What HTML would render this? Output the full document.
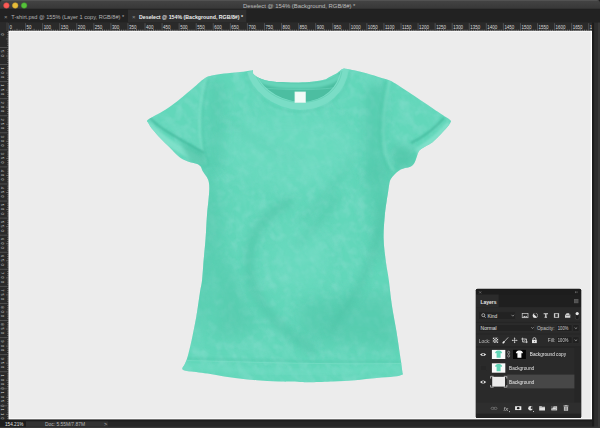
<!DOCTYPE html>
<html><head><meta charset="utf-8">
<style>
*{margin:0;padding:0;box-sizing:border-box}
html,body{width:600px;height:428px;overflow:hidden;background:#262626;font-family:"Liberation Sans",sans-serif}
svg{position:absolute;left:0;top:0}
.rt text{font-size:5.2px;fill:#dcdcdc;font-family:"Liberation Sans",sans-serif}
.rt text.lv{font-size:4.1px;fill:#d4d4d4}
.ui text{font-family:"Liberation Sans",sans-serif}
</style></head><body>
<svg width="600" height="428" viewBox="0 0 600 428" class="ui">
<defs>
<filter id="tex" x="0" y="0" width="100%" height="100%">
<feTurbulence type="fractalNoise" baseFrequency="0.05 0.03" numOctaves="3" seed="7" result="n"/>
<feColorMatrix in="n" type="matrix" values="0 0 0 0 0  0 0 0 0 0  0 0 0 0 0  0 0 0 -1.6 0.9" result="a"/>
<feComposite in="a" in2="SourceGraphic" operator="in"/>
</filter>
</defs>
<!-- title bar -->
<defs><linearGradient id="tg" x1="0" y1="0" x2="0" y2="1"><stop offset="0" stop-color="#444"/><stop offset="1" stop-color="#363636"/></linearGradient></defs><rect x="0" y="0" width="600" height="9.3" fill="url(#tg)"/><rect x="0" y="8.8" width="600" height="0.8" fill="#1c1c1c"/>
<rect x="0" y="0" width="600" height="0.7" fill="#5a5a5a"/>
<path d="M0,0 h3 a3,3 0 0 0 -3,3 z M600,0 h-3 a3,3 0 0 1 3,3 z" fill="#1a1a1a"/>
<circle cx="6.4" cy="5.5" r="2.8" fill="#fc5b57" stroke="#d0443f" stroke-width="0.5"/>
<circle cx="15.2" cy="5.5" r="2.8" fill="#e6bd3a" stroke="#c49a2a" stroke-width="0.5"/>
<circle cx="24.1" cy="5.5" r="2.8" fill="#56c13a" stroke="#3f9a2a" stroke-width="0.5"/>
<text x="243" y="7.5" font-size="5.9" fill="#bcbcbc">Deselect @ 154% (Background, RGB/8#) *</text>
<!-- tab bar -->
<rect x="0" y="9.6" width="600" height="12.9" fill="#222222"/>
<rect x="128" y="9.6" width="118.3" height="12.9" fill="#2f2f2f"/>
<text x="4" y="19" font-size="6" fill="#909090">×</text>
<text x="11.3" y="19" font-size="5.6" fill="#b4b4b4">T-shirt.psd @ 155% (Layer 1 copy, RGB/8#) *</text>
<text x="132" y="19" font-size="6" fill="#909090">×</text>
<text x="139" y="19" font-size="5.25" font-weight="bold" fill="#ededed">Deselect @ 154% (Background, RGB/8#) *</text>
<!-- rulers -->
<rect x="0" y="22.5" width="600" height="8.5" fill="#2a2a2a"/>
<rect x="0" y="22.5" width="8.5" height="400" fill="#2a2a2a"/>
<g class="rt">
<line x1="8.50" y1="23.2" x2="8.50" y2="31" stroke="#6e6e6e" stroke-width="0.6"/>
<text transform="translate(9.50,28.75) scale(0.86,1)">0</text>
<line x1="25.57" y1="23.2" x2="25.57" y2="31" stroke="#6e6e6e" stroke-width="0.6"/>
<text transform="translate(26.57,28.75) scale(0.86,1)">50</text>
<line x1="42.63" y1="23.2" x2="42.63" y2="31" stroke="#6e6e6e" stroke-width="0.6"/>
<text transform="translate(43.63,28.75) scale(0.86,1)">100</text>
<line x1="59.70" y1="23.2" x2="59.70" y2="31" stroke="#6e6e6e" stroke-width="0.6"/>
<text transform="translate(60.70,28.75) scale(0.86,1)">150</text>
<line x1="76.76" y1="23.2" x2="76.76" y2="31" stroke="#6e6e6e" stroke-width="0.6"/>
<text transform="translate(77.76,28.75) scale(0.86,1)">200</text>
<line x1="93.83" y1="23.2" x2="93.83" y2="31" stroke="#6e6e6e" stroke-width="0.6"/>
<text transform="translate(94.83,28.75) scale(0.86,1)">250</text>
<line x1="110.89" y1="23.2" x2="110.89" y2="31" stroke="#6e6e6e" stroke-width="0.6"/>
<text transform="translate(111.89,28.75) scale(0.86,1)">300</text>
<line x1="127.96" y1="23.2" x2="127.96" y2="31" stroke="#6e6e6e" stroke-width="0.6"/>
<text transform="translate(128.96,28.75) scale(0.86,1)">350</text>
<line x1="145.02" y1="23.2" x2="145.02" y2="31" stroke="#6e6e6e" stroke-width="0.6"/>
<text transform="translate(146.02,28.75) scale(0.86,1)">400</text>
<line x1="162.09" y1="23.2" x2="162.09" y2="31" stroke="#6e6e6e" stroke-width="0.6"/>
<text transform="translate(163.09,28.75) scale(0.86,1)">450</text>
<line x1="179.15" y1="23.2" x2="179.15" y2="31" stroke="#6e6e6e" stroke-width="0.6"/>
<text transform="translate(180.15,28.75) scale(0.86,1)">500</text>
<line x1="196.22" y1="23.2" x2="196.22" y2="31" stroke="#6e6e6e" stroke-width="0.6"/>
<text transform="translate(197.22,28.75) scale(0.86,1)">550</text>
<line x1="213.28" y1="23.2" x2="213.28" y2="31" stroke="#6e6e6e" stroke-width="0.6"/>
<text transform="translate(214.28,28.75) scale(0.86,1)">600</text>
<line x1="230.35" y1="23.2" x2="230.35" y2="31" stroke="#6e6e6e" stroke-width="0.6"/>
<text transform="translate(231.35,28.75) scale(0.86,1)">650</text>
<line x1="247.41" y1="23.2" x2="247.41" y2="31" stroke="#6e6e6e" stroke-width="0.6"/>
<text transform="translate(248.41,28.75) scale(0.86,1)">700</text>
<line x1="264.48" y1="23.2" x2="264.48" y2="31" stroke="#6e6e6e" stroke-width="0.6"/>
<text transform="translate(265.48,28.75) scale(0.86,1)">750</text>
<line x1="281.54" y1="23.2" x2="281.54" y2="31" stroke="#6e6e6e" stroke-width="0.6"/>
<text transform="translate(282.54,28.75) scale(0.86,1)">800</text>
<line x1="298.61" y1="23.2" x2="298.61" y2="31" stroke="#6e6e6e" stroke-width="0.6"/>
<text transform="translate(299.61,28.75) scale(0.86,1)">850</text>
<line x1="315.67" y1="23.2" x2="315.67" y2="31" stroke="#6e6e6e" stroke-width="0.6"/>
<text transform="translate(316.67,28.75) scale(0.86,1)">900</text>
<line x1="332.74" y1="23.2" x2="332.74" y2="31" stroke="#6e6e6e" stroke-width="0.6"/>
<text transform="translate(333.74,28.75) scale(0.86,1)">950</text>
<line x1="349.80" y1="23.2" x2="349.80" y2="31" stroke="#6e6e6e" stroke-width="0.6"/>
<text transform="translate(350.80,28.75) scale(0.86,1)">1000</text>
<line x1="366.87" y1="23.2" x2="366.87" y2="31" stroke="#6e6e6e" stroke-width="0.6"/>
<text transform="translate(367.87,28.75) scale(0.86,1)">1050</text>
<line x1="383.93" y1="23.2" x2="383.93" y2="31" stroke="#6e6e6e" stroke-width="0.6"/>
<text transform="translate(384.93,28.75) scale(0.86,1)">1100</text>
<line x1="401.00" y1="23.2" x2="401.00" y2="31" stroke="#6e6e6e" stroke-width="0.6"/>
<text transform="translate(402.00,28.75) scale(0.86,1)">1150</text>
<line x1="418.06" y1="23.2" x2="418.06" y2="31" stroke="#6e6e6e" stroke-width="0.6"/>
<text transform="translate(419.06,28.75) scale(0.86,1)">1200</text>
<line x1="435.13" y1="23.2" x2="435.13" y2="31" stroke="#6e6e6e" stroke-width="0.6"/>
<text transform="translate(436.13,28.75) scale(0.86,1)">1250</text>
<line x1="452.19" y1="23.2" x2="452.19" y2="31" stroke="#6e6e6e" stroke-width="0.6"/>
<text transform="translate(453.19,28.75) scale(0.86,1)">1300</text>
<line x1="469.26" y1="23.2" x2="469.26" y2="31" stroke="#6e6e6e" stroke-width="0.6"/>
<text transform="translate(470.26,28.75) scale(0.86,1)">1350</text>
<line x1="486.32" y1="23.2" x2="486.32" y2="31" stroke="#6e6e6e" stroke-width="0.6"/>
<text transform="translate(487.32,28.75) scale(0.86,1)">1400</text>
<line x1="503.39" y1="23.2" x2="503.39" y2="31" stroke="#6e6e6e" stroke-width="0.6"/>
<text transform="translate(504.39,28.75) scale(0.86,1)">1450</text>
<line x1="520.45" y1="23.2" x2="520.45" y2="31" stroke="#6e6e6e" stroke-width="0.6"/>
<text transform="translate(521.45,28.75) scale(0.86,1)">1500</text>
<line x1="537.51" y1="23.2" x2="537.51" y2="31" stroke="#6e6e6e" stroke-width="0.6"/>
<text transform="translate(538.51,28.75) scale(0.86,1)">1550</text>
<line x1="554.58" y1="23.2" x2="554.58" y2="31" stroke="#6e6e6e" stroke-width="0.6"/>
<text transform="translate(555.58,28.75) scale(0.86,1)">1600</text>
<line x1="571.65" y1="23.2" x2="571.65" y2="31" stroke="#6e6e6e" stroke-width="0.6"/>
<text transform="translate(572.65,28.75) scale(0.86,1)">1650</text>
<line x1="588.71" y1="23.2" x2="588.71" y2="31" stroke="#6e6e6e" stroke-width="0.6"/>
<text transform="translate(589.71,28.75) scale(0.86,1)">1700</text>
<line x1="10.63" y1="29.70" x2="10.63" y2="31" stroke="#9a9a9a" stroke-width="0.6"/>
<line x1="12.77" y1="29.70" x2="12.77" y2="31" stroke="#9a9a9a" stroke-width="0.6"/>
<line x1="14.90" y1="29.70" x2="14.90" y2="31" stroke="#9a9a9a" stroke-width="0.6"/>
<line x1="17.03" y1="28.80" x2="17.03" y2="31" stroke="#9a9a9a" stroke-width="0.6"/>
<line x1="19.17" y1="29.70" x2="19.17" y2="31" stroke="#9a9a9a" stroke-width="0.6"/>
<line x1="21.30" y1="29.70" x2="21.30" y2="31" stroke="#9a9a9a" stroke-width="0.6"/>
<line x1="23.43" y1="29.70" x2="23.43" y2="31" stroke="#9a9a9a" stroke-width="0.6"/>
<line x1="27.70" y1="29.70" x2="27.70" y2="31" stroke="#9a9a9a" stroke-width="0.6"/>
<line x1="29.83" y1="29.70" x2="29.83" y2="31" stroke="#9a9a9a" stroke-width="0.6"/>
<line x1="31.96" y1="29.70" x2="31.96" y2="31" stroke="#9a9a9a" stroke-width="0.6"/>
<line x1="34.10" y1="28.80" x2="34.10" y2="31" stroke="#9a9a9a" stroke-width="0.6"/>
<line x1="36.23" y1="29.70" x2="36.23" y2="31" stroke="#9a9a9a" stroke-width="0.6"/>
<line x1="38.36" y1="29.70" x2="38.36" y2="31" stroke="#9a9a9a" stroke-width="0.6"/>
<line x1="40.50" y1="29.70" x2="40.50" y2="31" stroke="#9a9a9a" stroke-width="0.6"/>
<line x1="44.76" y1="29.70" x2="44.76" y2="31" stroke="#9a9a9a" stroke-width="0.6"/>
<line x1="46.90" y1="29.70" x2="46.90" y2="31" stroke="#9a9a9a" stroke-width="0.6"/>
<line x1="49.03" y1="29.70" x2="49.03" y2="31" stroke="#9a9a9a" stroke-width="0.6"/>
<line x1="51.16" y1="28.80" x2="51.16" y2="31" stroke="#9a9a9a" stroke-width="0.6"/>
<line x1="53.30" y1="29.70" x2="53.30" y2="31" stroke="#9a9a9a" stroke-width="0.6"/>
<line x1="55.43" y1="29.70" x2="55.43" y2="31" stroke="#9a9a9a" stroke-width="0.6"/>
<line x1="57.56" y1="29.70" x2="57.56" y2="31" stroke="#9a9a9a" stroke-width="0.6"/>
<line x1="61.83" y1="29.70" x2="61.83" y2="31" stroke="#9a9a9a" stroke-width="0.6"/>
<line x1="63.96" y1="29.70" x2="63.96" y2="31" stroke="#9a9a9a" stroke-width="0.6"/>
<line x1="66.09" y1="29.70" x2="66.09" y2="31" stroke="#9a9a9a" stroke-width="0.6"/>
<line x1="68.23" y1="28.80" x2="68.23" y2="31" stroke="#9a9a9a" stroke-width="0.6"/>
<line x1="70.36" y1="29.70" x2="70.36" y2="31" stroke="#9a9a9a" stroke-width="0.6"/>
<line x1="72.49" y1="29.70" x2="72.49" y2="31" stroke="#9a9a9a" stroke-width="0.6"/>
<line x1="74.63" y1="29.70" x2="74.63" y2="31" stroke="#9a9a9a" stroke-width="0.6"/>
<line x1="78.89" y1="29.70" x2="78.89" y2="31" stroke="#9a9a9a" stroke-width="0.6"/>
<line x1="81.03" y1="29.70" x2="81.03" y2="31" stroke="#9a9a9a" stroke-width="0.6"/>
<line x1="83.16" y1="29.70" x2="83.16" y2="31" stroke="#9a9a9a" stroke-width="0.6"/>
<line x1="85.29" y1="28.80" x2="85.29" y2="31" stroke="#9a9a9a" stroke-width="0.6"/>
<line x1="87.43" y1="29.70" x2="87.43" y2="31" stroke="#9a9a9a" stroke-width="0.6"/>
<line x1="89.56" y1="29.70" x2="89.56" y2="31" stroke="#9a9a9a" stroke-width="0.6"/>
<line x1="91.69" y1="29.70" x2="91.69" y2="31" stroke="#9a9a9a" stroke-width="0.6"/>
<line x1="95.96" y1="29.70" x2="95.96" y2="31" stroke="#9a9a9a" stroke-width="0.6"/>
<line x1="98.09" y1="29.70" x2="98.09" y2="31" stroke="#9a9a9a" stroke-width="0.6"/>
<line x1="100.22" y1="29.70" x2="100.22" y2="31" stroke="#9a9a9a" stroke-width="0.6"/>
<line x1="102.36" y1="28.80" x2="102.36" y2="31" stroke="#9a9a9a" stroke-width="0.6"/>
<line x1="104.49" y1="29.70" x2="104.49" y2="31" stroke="#9a9a9a" stroke-width="0.6"/>
<line x1="106.62" y1="29.70" x2="106.62" y2="31" stroke="#9a9a9a" stroke-width="0.6"/>
<line x1="108.76" y1="29.70" x2="108.76" y2="31" stroke="#9a9a9a" stroke-width="0.6"/>
<line x1="113.02" y1="29.70" x2="113.02" y2="31" stroke="#9a9a9a" stroke-width="0.6"/>
<line x1="115.16" y1="29.70" x2="115.16" y2="31" stroke="#9a9a9a" stroke-width="0.6"/>
<line x1="117.29" y1="29.70" x2="117.29" y2="31" stroke="#9a9a9a" stroke-width="0.6"/>
<line x1="119.42" y1="28.80" x2="119.42" y2="31" stroke="#9a9a9a" stroke-width="0.6"/>
<line x1="121.56" y1="29.70" x2="121.56" y2="31" stroke="#9a9a9a" stroke-width="0.6"/>
<line x1="123.69" y1="29.70" x2="123.69" y2="31" stroke="#9a9a9a" stroke-width="0.6"/>
<line x1="125.82" y1="29.70" x2="125.82" y2="31" stroke="#9a9a9a" stroke-width="0.6"/>
<line x1="130.09" y1="29.70" x2="130.09" y2="31" stroke="#9a9a9a" stroke-width="0.6"/>
<line x1="132.22" y1="29.70" x2="132.22" y2="31" stroke="#9a9a9a" stroke-width="0.6"/>
<line x1="134.35" y1="29.70" x2="134.35" y2="31" stroke="#9a9a9a" stroke-width="0.6"/>
<line x1="136.49" y1="28.80" x2="136.49" y2="31" stroke="#9a9a9a" stroke-width="0.6"/>
<line x1="138.62" y1="29.70" x2="138.62" y2="31" stroke="#9a9a9a" stroke-width="0.6"/>
<line x1="140.75" y1="29.70" x2="140.75" y2="31" stroke="#9a9a9a" stroke-width="0.6"/>
<line x1="142.89" y1="29.70" x2="142.89" y2="31" stroke="#9a9a9a" stroke-width="0.6"/>
<line x1="147.15" y1="29.70" x2="147.15" y2="31" stroke="#9a9a9a" stroke-width="0.6"/>
<line x1="149.29" y1="29.70" x2="149.29" y2="31" stroke="#9a9a9a" stroke-width="0.6"/>
<line x1="151.42" y1="29.70" x2="151.42" y2="31" stroke="#9a9a9a" stroke-width="0.6"/>
<line x1="153.55" y1="28.80" x2="153.55" y2="31" stroke="#9a9a9a" stroke-width="0.6"/>
<line x1="155.69" y1="29.70" x2="155.69" y2="31" stroke="#9a9a9a" stroke-width="0.6"/>
<line x1="157.82" y1="29.70" x2="157.82" y2="31" stroke="#9a9a9a" stroke-width="0.6"/>
<line x1="159.95" y1="29.70" x2="159.95" y2="31" stroke="#9a9a9a" stroke-width="0.6"/>
<line x1="164.22" y1="29.70" x2="164.22" y2="31" stroke="#9a9a9a" stroke-width="0.6"/>
<line x1="166.35" y1="29.70" x2="166.35" y2="31" stroke="#9a9a9a" stroke-width="0.6"/>
<line x1="168.48" y1="29.70" x2="168.48" y2="31" stroke="#9a9a9a" stroke-width="0.6"/>
<line x1="170.62" y1="28.80" x2="170.62" y2="31" stroke="#9a9a9a" stroke-width="0.6"/>
<line x1="172.75" y1="29.70" x2="172.75" y2="31" stroke="#9a9a9a" stroke-width="0.6"/>
<line x1="174.88" y1="29.70" x2="174.88" y2="31" stroke="#9a9a9a" stroke-width="0.6"/>
<line x1="177.02" y1="29.70" x2="177.02" y2="31" stroke="#9a9a9a" stroke-width="0.6"/>
<line x1="181.28" y1="29.70" x2="181.28" y2="31" stroke="#9a9a9a" stroke-width="0.6"/>
<line x1="183.42" y1="29.70" x2="183.42" y2="31" stroke="#9a9a9a" stroke-width="0.6"/>
<line x1="185.55" y1="29.70" x2="185.55" y2="31" stroke="#9a9a9a" stroke-width="0.6"/>
<line x1="187.68" y1="28.80" x2="187.68" y2="31" stroke="#9a9a9a" stroke-width="0.6"/>
<line x1="189.82" y1="29.70" x2="189.82" y2="31" stroke="#9a9a9a" stroke-width="0.6"/>
<line x1="191.95" y1="29.70" x2="191.95" y2="31" stroke="#9a9a9a" stroke-width="0.6"/>
<line x1="194.08" y1="29.70" x2="194.08" y2="31" stroke="#9a9a9a" stroke-width="0.6"/>
<line x1="198.35" y1="29.70" x2="198.35" y2="31" stroke="#9a9a9a" stroke-width="0.6"/>
<line x1="200.48" y1="29.70" x2="200.48" y2="31" stroke="#9a9a9a" stroke-width="0.6"/>
<line x1="202.61" y1="29.70" x2="202.61" y2="31" stroke="#9a9a9a" stroke-width="0.6"/>
<line x1="204.75" y1="28.80" x2="204.75" y2="31" stroke="#9a9a9a" stroke-width="0.6"/>
<line x1="206.88" y1="29.70" x2="206.88" y2="31" stroke="#9a9a9a" stroke-width="0.6"/>
<line x1="209.01" y1="29.70" x2="209.01" y2="31" stroke="#9a9a9a" stroke-width="0.6"/>
<line x1="211.15" y1="29.70" x2="211.15" y2="31" stroke="#9a9a9a" stroke-width="0.6"/>
<line x1="215.41" y1="29.70" x2="215.41" y2="31" stroke="#9a9a9a" stroke-width="0.6"/>
<line x1="217.55" y1="29.70" x2="217.55" y2="31" stroke="#9a9a9a" stroke-width="0.6"/>
<line x1="219.68" y1="29.70" x2="219.68" y2="31" stroke="#9a9a9a" stroke-width="0.6"/>
<line x1="221.81" y1="28.80" x2="221.81" y2="31" stroke="#9a9a9a" stroke-width="0.6"/>
<line x1="223.95" y1="29.70" x2="223.95" y2="31" stroke="#9a9a9a" stroke-width="0.6"/>
<line x1="226.08" y1="29.70" x2="226.08" y2="31" stroke="#9a9a9a" stroke-width="0.6"/>
<line x1="228.21" y1="29.70" x2="228.21" y2="31" stroke="#9a9a9a" stroke-width="0.6"/>
<line x1="232.48" y1="29.70" x2="232.48" y2="31" stroke="#9a9a9a" stroke-width="0.6"/>
<line x1="234.61" y1="29.70" x2="234.61" y2="31" stroke="#9a9a9a" stroke-width="0.6"/>
<line x1="236.74" y1="29.70" x2="236.74" y2="31" stroke="#9a9a9a" stroke-width="0.6"/>
<line x1="238.88" y1="28.80" x2="238.88" y2="31" stroke="#9a9a9a" stroke-width="0.6"/>
<line x1="241.01" y1="29.70" x2="241.01" y2="31" stroke="#9a9a9a" stroke-width="0.6"/>
<line x1="243.14" y1="29.70" x2="243.14" y2="31" stroke="#9a9a9a" stroke-width="0.6"/>
<line x1="245.28" y1="29.70" x2="245.28" y2="31" stroke="#9a9a9a" stroke-width="0.6"/>
<line x1="249.54" y1="29.70" x2="249.54" y2="31" stroke="#9a9a9a" stroke-width="0.6"/>
<line x1="251.68" y1="29.70" x2="251.68" y2="31" stroke="#9a9a9a" stroke-width="0.6"/>
<line x1="253.81" y1="29.70" x2="253.81" y2="31" stroke="#9a9a9a" stroke-width="0.6"/>
<line x1="255.94" y1="28.80" x2="255.94" y2="31" stroke="#9a9a9a" stroke-width="0.6"/>
<line x1="258.08" y1="29.70" x2="258.08" y2="31" stroke="#9a9a9a" stroke-width="0.6"/>
<line x1="260.21" y1="29.70" x2="260.21" y2="31" stroke="#9a9a9a" stroke-width="0.6"/>
<line x1="262.34" y1="29.70" x2="262.34" y2="31" stroke="#9a9a9a" stroke-width="0.6"/>
<line x1="266.61" y1="29.70" x2="266.61" y2="31" stroke="#9a9a9a" stroke-width="0.6"/>
<line x1="268.74" y1="29.70" x2="268.74" y2="31" stroke="#9a9a9a" stroke-width="0.6"/>
<line x1="270.87" y1="29.70" x2="270.87" y2="31" stroke="#9a9a9a" stroke-width="0.6"/>
<line x1="273.01" y1="28.80" x2="273.01" y2="31" stroke="#9a9a9a" stroke-width="0.6"/>
<line x1="275.14" y1="29.70" x2="275.14" y2="31" stroke="#9a9a9a" stroke-width="0.6"/>
<line x1="277.27" y1="29.70" x2="277.27" y2="31" stroke="#9a9a9a" stroke-width="0.6"/>
<line x1="279.41" y1="29.70" x2="279.41" y2="31" stroke="#9a9a9a" stroke-width="0.6"/>
<line x1="283.67" y1="29.70" x2="283.67" y2="31" stroke="#9a9a9a" stroke-width="0.6"/>
<line x1="285.81" y1="29.70" x2="285.81" y2="31" stroke="#9a9a9a" stroke-width="0.6"/>
<line x1="287.94" y1="29.70" x2="287.94" y2="31" stroke="#9a9a9a" stroke-width="0.6"/>
<line x1="290.07" y1="28.80" x2="290.07" y2="31" stroke="#9a9a9a" stroke-width="0.6"/>
<line x1="292.21" y1="29.70" x2="292.21" y2="31" stroke="#9a9a9a" stroke-width="0.6"/>
<line x1="294.34" y1="29.70" x2="294.34" y2="31" stroke="#9a9a9a" stroke-width="0.6"/>
<line x1="296.47" y1="29.70" x2="296.47" y2="31" stroke="#9a9a9a" stroke-width="0.6"/>
<line x1="300.74" y1="29.70" x2="300.74" y2="31" stroke="#9a9a9a" stroke-width="0.6"/>
<line x1="302.87" y1="29.70" x2="302.87" y2="31" stroke="#9a9a9a" stroke-width="0.6"/>
<line x1="305.00" y1="29.70" x2="305.00" y2="31" stroke="#9a9a9a" stroke-width="0.6"/>
<line x1="307.14" y1="28.80" x2="307.14" y2="31" stroke="#9a9a9a" stroke-width="0.6"/>
<line x1="309.27" y1="29.70" x2="309.27" y2="31" stroke="#9a9a9a" stroke-width="0.6"/>
<line x1="311.40" y1="29.70" x2="311.40" y2="31" stroke="#9a9a9a" stroke-width="0.6"/>
<line x1="313.54" y1="29.70" x2="313.54" y2="31" stroke="#9a9a9a" stroke-width="0.6"/>
<line x1="317.80" y1="29.70" x2="317.80" y2="31" stroke="#9a9a9a" stroke-width="0.6"/>
<line x1="319.94" y1="29.70" x2="319.94" y2="31" stroke="#9a9a9a" stroke-width="0.6"/>
<line x1="322.07" y1="29.70" x2="322.07" y2="31" stroke="#9a9a9a" stroke-width="0.6"/>
<line x1="324.20" y1="28.80" x2="324.20" y2="31" stroke="#9a9a9a" stroke-width="0.6"/>
<line x1="326.34" y1="29.70" x2="326.34" y2="31" stroke="#9a9a9a" stroke-width="0.6"/>
<line x1="328.47" y1="29.70" x2="328.47" y2="31" stroke="#9a9a9a" stroke-width="0.6"/>
<line x1="330.60" y1="29.70" x2="330.60" y2="31" stroke="#9a9a9a" stroke-width="0.6"/>
<line x1="334.87" y1="29.70" x2="334.87" y2="31" stroke="#9a9a9a" stroke-width="0.6"/>
<line x1="337.00" y1="29.70" x2="337.00" y2="31" stroke="#9a9a9a" stroke-width="0.6"/>
<line x1="339.13" y1="29.70" x2="339.13" y2="31" stroke="#9a9a9a" stroke-width="0.6"/>
<line x1="341.27" y1="28.80" x2="341.27" y2="31" stroke="#9a9a9a" stroke-width="0.6"/>
<line x1="343.40" y1="29.70" x2="343.40" y2="31" stroke="#9a9a9a" stroke-width="0.6"/>
<line x1="345.53" y1="29.70" x2="345.53" y2="31" stroke="#9a9a9a" stroke-width="0.6"/>
<line x1="347.67" y1="29.70" x2="347.67" y2="31" stroke="#9a9a9a" stroke-width="0.6"/>
<line x1="351.93" y1="29.70" x2="351.93" y2="31" stroke="#9a9a9a" stroke-width="0.6"/>
<line x1="354.07" y1="29.70" x2="354.07" y2="31" stroke="#9a9a9a" stroke-width="0.6"/>
<line x1="356.20" y1="29.70" x2="356.20" y2="31" stroke="#9a9a9a" stroke-width="0.6"/>
<line x1="358.33" y1="28.80" x2="358.33" y2="31" stroke="#9a9a9a" stroke-width="0.6"/>
<line x1="360.47" y1="29.70" x2="360.47" y2="31" stroke="#9a9a9a" stroke-width="0.6"/>
<line x1="362.60" y1="29.70" x2="362.60" y2="31" stroke="#9a9a9a" stroke-width="0.6"/>
<line x1="364.73" y1="29.70" x2="364.73" y2="31" stroke="#9a9a9a" stroke-width="0.6"/>
<line x1="369.00" y1="29.70" x2="369.00" y2="31" stroke="#9a9a9a" stroke-width="0.6"/>
<line x1="371.13" y1="29.70" x2="371.13" y2="31" stroke="#9a9a9a" stroke-width="0.6"/>
<line x1="373.26" y1="29.70" x2="373.26" y2="31" stroke="#9a9a9a" stroke-width="0.6"/>
<line x1="375.40" y1="28.80" x2="375.40" y2="31" stroke="#9a9a9a" stroke-width="0.6"/>
<line x1="377.53" y1="29.70" x2="377.53" y2="31" stroke="#9a9a9a" stroke-width="0.6"/>
<line x1="379.66" y1="29.70" x2="379.66" y2="31" stroke="#9a9a9a" stroke-width="0.6"/>
<line x1="381.80" y1="29.70" x2="381.80" y2="31" stroke="#9a9a9a" stroke-width="0.6"/>
<line x1="386.06" y1="29.70" x2="386.06" y2="31" stroke="#9a9a9a" stroke-width="0.6"/>
<line x1="388.20" y1="29.70" x2="388.20" y2="31" stroke="#9a9a9a" stroke-width="0.6"/>
<line x1="390.33" y1="29.70" x2="390.33" y2="31" stroke="#9a9a9a" stroke-width="0.6"/>
<line x1="392.46" y1="28.80" x2="392.46" y2="31" stroke="#9a9a9a" stroke-width="0.6"/>
<line x1="394.60" y1="29.70" x2="394.60" y2="31" stroke="#9a9a9a" stroke-width="0.6"/>
<line x1="396.73" y1="29.70" x2="396.73" y2="31" stroke="#9a9a9a" stroke-width="0.6"/>
<line x1="398.86" y1="29.70" x2="398.86" y2="31" stroke="#9a9a9a" stroke-width="0.6"/>
<line x1="403.13" y1="29.70" x2="403.13" y2="31" stroke="#9a9a9a" stroke-width="0.6"/>
<line x1="405.26" y1="29.70" x2="405.26" y2="31" stroke="#9a9a9a" stroke-width="0.6"/>
<line x1="407.39" y1="29.70" x2="407.39" y2="31" stroke="#9a9a9a" stroke-width="0.6"/>
<line x1="409.53" y1="28.80" x2="409.53" y2="31" stroke="#9a9a9a" stroke-width="0.6"/>
<line x1="411.66" y1="29.70" x2="411.66" y2="31" stroke="#9a9a9a" stroke-width="0.6"/>
<line x1="413.79" y1="29.70" x2="413.79" y2="31" stroke="#9a9a9a" stroke-width="0.6"/>
<line x1="415.93" y1="29.70" x2="415.93" y2="31" stroke="#9a9a9a" stroke-width="0.6"/>
<line x1="420.19" y1="29.70" x2="420.19" y2="31" stroke="#9a9a9a" stroke-width="0.6"/>
<line x1="422.33" y1="29.70" x2="422.33" y2="31" stroke="#9a9a9a" stroke-width="0.6"/>
<line x1="424.46" y1="29.70" x2="424.46" y2="31" stroke="#9a9a9a" stroke-width="0.6"/>
<line x1="426.59" y1="28.80" x2="426.59" y2="31" stroke="#9a9a9a" stroke-width="0.6"/>
<line x1="428.73" y1="29.70" x2="428.73" y2="31" stroke="#9a9a9a" stroke-width="0.6"/>
<line x1="430.86" y1="29.70" x2="430.86" y2="31" stroke="#9a9a9a" stroke-width="0.6"/>
<line x1="432.99" y1="29.70" x2="432.99" y2="31" stroke="#9a9a9a" stroke-width="0.6"/>
<line x1="437.26" y1="29.70" x2="437.26" y2="31" stroke="#9a9a9a" stroke-width="0.6"/>
<line x1="439.39" y1="29.70" x2="439.39" y2="31" stroke="#9a9a9a" stroke-width="0.6"/>
<line x1="441.52" y1="29.70" x2="441.52" y2="31" stroke="#9a9a9a" stroke-width="0.6"/>
<line x1="443.66" y1="28.80" x2="443.66" y2="31" stroke="#9a9a9a" stroke-width="0.6"/>
<line x1="445.79" y1="29.70" x2="445.79" y2="31" stroke="#9a9a9a" stroke-width="0.6"/>
<line x1="447.92" y1="29.70" x2="447.92" y2="31" stroke="#9a9a9a" stroke-width="0.6"/>
<line x1="450.06" y1="29.70" x2="450.06" y2="31" stroke="#9a9a9a" stroke-width="0.6"/>
<line x1="454.32" y1="29.70" x2="454.32" y2="31" stroke="#9a9a9a" stroke-width="0.6"/>
<line x1="456.46" y1="29.70" x2="456.46" y2="31" stroke="#9a9a9a" stroke-width="0.6"/>
<line x1="458.59" y1="29.70" x2="458.59" y2="31" stroke="#9a9a9a" stroke-width="0.6"/>
<line x1="460.72" y1="28.80" x2="460.72" y2="31" stroke="#9a9a9a" stroke-width="0.6"/>
<line x1="462.86" y1="29.70" x2="462.86" y2="31" stroke="#9a9a9a" stroke-width="0.6"/>
<line x1="464.99" y1="29.70" x2="464.99" y2="31" stroke="#9a9a9a" stroke-width="0.6"/>
<line x1="467.12" y1="29.70" x2="467.12" y2="31" stroke="#9a9a9a" stroke-width="0.6"/>
<line x1="471.39" y1="29.70" x2="471.39" y2="31" stroke="#9a9a9a" stroke-width="0.6"/>
<line x1="473.52" y1="29.70" x2="473.52" y2="31" stroke="#9a9a9a" stroke-width="0.6"/>
<line x1="475.65" y1="29.70" x2="475.65" y2="31" stroke="#9a9a9a" stroke-width="0.6"/>
<line x1="477.79" y1="28.80" x2="477.79" y2="31" stroke="#9a9a9a" stroke-width="0.6"/>
<line x1="479.92" y1="29.70" x2="479.92" y2="31" stroke="#9a9a9a" stroke-width="0.6"/>
<line x1="482.05" y1="29.70" x2="482.05" y2="31" stroke="#9a9a9a" stroke-width="0.6"/>
<line x1="484.19" y1="29.70" x2="484.19" y2="31" stroke="#9a9a9a" stroke-width="0.6"/>
<line x1="488.45" y1="29.70" x2="488.45" y2="31" stroke="#9a9a9a" stroke-width="0.6"/>
<line x1="490.59" y1="29.70" x2="490.59" y2="31" stroke="#9a9a9a" stroke-width="0.6"/>
<line x1="492.72" y1="29.70" x2="492.72" y2="31" stroke="#9a9a9a" stroke-width="0.6"/>
<line x1="494.85" y1="28.80" x2="494.85" y2="31" stroke="#9a9a9a" stroke-width="0.6"/>
<line x1="496.99" y1="29.70" x2="496.99" y2="31" stroke="#9a9a9a" stroke-width="0.6"/>
<line x1="499.12" y1="29.70" x2="499.12" y2="31" stroke="#9a9a9a" stroke-width="0.6"/>
<line x1="501.25" y1="29.70" x2="501.25" y2="31" stroke="#9a9a9a" stroke-width="0.6"/>
<line x1="505.52" y1="29.70" x2="505.52" y2="31" stroke="#9a9a9a" stroke-width="0.6"/>
<line x1="507.65" y1="29.70" x2="507.65" y2="31" stroke="#9a9a9a" stroke-width="0.6"/>
<line x1="509.78" y1="29.70" x2="509.78" y2="31" stroke="#9a9a9a" stroke-width="0.6"/>
<line x1="511.92" y1="28.80" x2="511.92" y2="31" stroke="#9a9a9a" stroke-width="0.6"/>
<line x1="514.05" y1="29.70" x2="514.05" y2="31" stroke="#9a9a9a" stroke-width="0.6"/>
<line x1="516.18" y1="29.70" x2="516.18" y2="31" stroke="#9a9a9a" stroke-width="0.6"/>
<line x1="518.32" y1="29.70" x2="518.32" y2="31" stroke="#9a9a9a" stroke-width="0.6"/>
<line x1="522.58" y1="29.70" x2="522.58" y2="31" stroke="#9a9a9a" stroke-width="0.6"/>
<line x1="524.72" y1="29.70" x2="524.72" y2="31" stroke="#9a9a9a" stroke-width="0.6"/>
<line x1="526.85" y1="29.70" x2="526.85" y2="31" stroke="#9a9a9a" stroke-width="0.6"/>
<line x1="528.98" y1="28.80" x2="528.98" y2="31" stroke="#9a9a9a" stroke-width="0.6"/>
<line x1="531.12" y1="29.70" x2="531.12" y2="31" stroke="#9a9a9a" stroke-width="0.6"/>
<line x1="533.25" y1="29.70" x2="533.25" y2="31" stroke="#9a9a9a" stroke-width="0.6"/>
<line x1="535.38" y1="29.70" x2="535.38" y2="31" stroke="#9a9a9a" stroke-width="0.6"/>
<line x1="539.65" y1="29.70" x2="539.65" y2="31" stroke="#9a9a9a" stroke-width="0.6"/>
<line x1="541.78" y1="29.70" x2="541.78" y2="31" stroke="#9a9a9a" stroke-width="0.6"/>
<line x1="543.91" y1="29.70" x2="543.91" y2="31" stroke="#9a9a9a" stroke-width="0.6"/>
<line x1="546.05" y1="28.80" x2="546.05" y2="31" stroke="#9a9a9a" stroke-width="0.6"/>
<line x1="548.18" y1="29.70" x2="548.18" y2="31" stroke="#9a9a9a" stroke-width="0.6"/>
<line x1="550.31" y1="29.70" x2="550.31" y2="31" stroke="#9a9a9a" stroke-width="0.6"/>
<line x1="552.45" y1="29.70" x2="552.45" y2="31" stroke="#9a9a9a" stroke-width="0.6"/>
<line x1="556.71" y1="29.70" x2="556.71" y2="31" stroke="#9a9a9a" stroke-width="0.6"/>
<line x1="558.85" y1="29.70" x2="558.85" y2="31" stroke="#9a9a9a" stroke-width="0.6"/>
<line x1="560.98" y1="29.70" x2="560.98" y2="31" stroke="#9a9a9a" stroke-width="0.6"/>
<line x1="563.11" y1="28.80" x2="563.11" y2="31" stroke="#9a9a9a" stroke-width="0.6"/>
<line x1="565.25" y1="29.70" x2="565.25" y2="31" stroke="#9a9a9a" stroke-width="0.6"/>
<line x1="567.38" y1="29.70" x2="567.38" y2="31" stroke="#9a9a9a" stroke-width="0.6"/>
<line x1="569.51" y1="29.70" x2="569.51" y2="31" stroke="#9a9a9a" stroke-width="0.6"/>
<line x1="573.78" y1="29.70" x2="573.78" y2="31" stroke="#9a9a9a" stroke-width="0.6"/>
<line x1="575.91" y1="29.70" x2="575.91" y2="31" stroke="#9a9a9a" stroke-width="0.6"/>
<line x1="578.04" y1="29.70" x2="578.04" y2="31" stroke="#9a9a9a" stroke-width="0.6"/>
<line x1="580.18" y1="28.80" x2="580.18" y2="31" stroke="#9a9a9a" stroke-width="0.6"/>
<line x1="582.31" y1="29.70" x2="582.31" y2="31" stroke="#9a9a9a" stroke-width="0.6"/>
<line x1="584.44" y1="29.70" x2="584.44" y2="31" stroke="#9a9a9a" stroke-width="0.6"/>
<line x1="586.58" y1="29.70" x2="586.58" y2="31" stroke="#9a9a9a" stroke-width="0.6"/>
<line x1="590.84" y1="29.70" x2="590.84" y2="31" stroke="#9a9a9a" stroke-width="0.6"/>
<line x1="0" y1="30.40" x2="8.5" y2="30.40" stroke="#6a6a6a" stroke-width="0.6"/>
<text class="lv" text-anchor="middle" transform="translate(2.2,34.30) rotate(90)" dy="1.3">0</text>
<line x1="0" y1="47.47" x2="8.5" y2="47.47" stroke="#6a6a6a" stroke-width="0.6"/>
<text class="lv" text-anchor="middle" transform="translate(2.2,51.37) rotate(90)" dy="1.3">5</text>
<text class="lv" text-anchor="middle" transform="translate(2.2,55.66) rotate(90)" dy="1.3">0</text>
<line x1="0" y1="64.53" x2="8.5" y2="64.53" stroke="#6a6a6a" stroke-width="0.6"/>
<text class="lv" text-anchor="middle" transform="translate(2.2,68.43) rotate(90)" dy="1.3">1</text>
<text class="lv" text-anchor="middle" transform="translate(2.2,72.73) rotate(90)" dy="1.3">0</text>
<text class="lv" text-anchor="middle" transform="translate(2.2,77.03) rotate(90)" dy="1.3">0</text>
<line x1="0" y1="81.59" x2="8.5" y2="81.59" stroke="#6a6a6a" stroke-width="0.6"/>
<text class="lv" text-anchor="middle" transform="translate(2.2,85.50) rotate(90)" dy="1.3">1</text>
<text class="lv" text-anchor="middle" transform="translate(2.2,89.80) rotate(90)" dy="1.3">5</text>
<text class="lv" text-anchor="middle" transform="translate(2.2,94.09) rotate(90)" dy="1.3">0</text>
<line x1="0" y1="98.66" x2="8.5" y2="98.66" stroke="#6a6a6a" stroke-width="0.6"/>
<text class="lv" text-anchor="middle" transform="translate(2.2,102.56) rotate(90)" dy="1.3">2</text>
<text class="lv" text-anchor="middle" transform="translate(2.2,106.86) rotate(90)" dy="1.3">0</text>
<text class="lv" text-anchor="middle" transform="translate(2.2,111.16) rotate(90)" dy="1.3">0</text>
<line x1="0" y1="115.72" x2="8.5" y2="115.72" stroke="#6a6a6a" stroke-width="0.6"/>
<text class="lv" text-anchor="middle" transform="translate(2.2,119.62) rotate(90)" dy="1.3">2</text>
<text class="lv" text-anchor="middle" transform="translate(2.2,123.92) rotate(90)" dy="1.3">5</text>
<text class="lv" text-anchor="middle" transform="translate(2.2,128.22) rotate(90)" dy="1.3">0</text>
<line x1="0" y1="132.79" x2="8.5" y2="132.79" stroke="#6a6a6a" stroke-width="0.6"/>
<text class="lv" text-anchor="middle" transform="translate(2.2,136.69) rotate(90)" dy="1.3">3</text>
<text class="lv" text-anchor="middle" transform="translate(2.2,140.99) rotate(90)" dy="1.3">0</text>
<text class="lv" text-anchor="middle" transform="translate(2.2,145.29) rotate(90)" dy="1.3">0</text>
<line x1="0" y1="149.86" x2="8.5" y2="149.86" stroke="#6a6a6a" stroke-width="0.6"/>
<text class="lv" text-anchor="middle" transform="translate(2.2,153.76) rotate(90)" dy="1.3">3</text>
<text class="lv" text-anchor="middle" transform="translate(2.2,158.06) rotate(90)" dy="1.3">5</text>
<text class="lv" text-anchor="middle" transform="translate(2.2,162.36) rotate(90)" dy="1.3">0</text>
<line x1="0" y1="166.92" x2="8.5" y2="166.92" stroke="#6a6a6a" stroke-width="0.6"/>
<text class="lv" text-anchor="middle" transform="translate(2.2,170.82) rotate(90)" dy="1.3">4</text>
<text class="lv" text-anchor="middle" transform="translate(2.2,175.12) rotate(90)" dy="1.3">0</text>
<text class="lv" text-anchor="middle" transform="translate(2.2,179.42) rotate(90)" dy="1.3">0</text>
<line x1="0" y1="183.99" x2="8.5" y2="183.99" stroke="#6a6a6a" stroke-width="0.6"/>
<text class="lv" text-anchor="middle" transform="translate(2.2,187.89) rotate(90)" dy="1.3">4</text>
<text class="lv" text-anchor="middle" transform="translate(2.2,192.19) rotate(90)" dy="1.3">5</text>
<text class="lv" text-anchor="middle" transform="translate(2.2,196.49) rotate(90)" dy="1.3">0</text>
<line x1="0" y1="201.05" x2="8.5" y2="201.05" stroke="#6a6a6a" stroke-width="0.6"/>
<text class="lv" text-anchor="middle" transform="translate(2.2,204.95) rotate(90)" dy="1.3">5</text>
<text class="lv" text-anchor="middle" transform="translate(2.2,209.25) rotate(90)" dy="1.3">0</text>
<text class="lv" text-anchor="middle" transform="translate(2.2,213.55) rotate(90)" dy="1.3">0</text>
<line x1="0" y1="218.12" x2="8.5" y2="218.12" stroke="#6a6a6a" stroke-width="0.6"/>
<text class="lv" text-anchor="middle" transform="translate(2.2,222.02) rotate(90)" dy="1.3">5</text>
<text class="lv" text-anchor="middle" transform="translate(2.2,226.32) rotate(90)" dy="1.3">5</text>
<text class="lv" text-anchor="middle" transform="translate(2.2,230.62) rotate(90)" dy="1.3">0</text>
<line x1="0" y1="235.18" x2="8.5" y2="235.18" stroke="#6a6a6a" stroke-width="0.6"/>
<text class="lv" text-anchor="middle" transform="translate(2.2,239.08) rotate(90)" dy="1.3">6</text>
<text class="lv" text-anchor="middle" transform="translate(2.2,243.38) rotate(90)" dy="1.3">0</text>
<text class="lv" text-anchor="middle" transform="translate(2.2,247.68) rotate(90)" dy="1.3">0</text>
<line x1="0" y1="252.25" x2="8.5" y2="252.25" stroke="#6a6a6a" stroke-width="0.6"/>
<text class="lv" text-anchor="middle" transform="translate(2.2,256.15) rotate(90)" dy="1.3">6</text>
<text class="lv" text-anchor="middle" transform="translate(2.2,260.45) rotate(90)" dy="1.3">5</text>
<text class="lv" text-anchor="middle" transform="translate(2.2,264.75) rotate(90)" dy="1.3">0</text>
<line x1="0" y1="269.31" x2="8.5" y2="269.31" stroke="#6a6a6a" stroke-width="0.6"/>
<text class="lv" text-anchor="middle" transform="translate(2.2,273.21) rotate(90)" dy="1.3">7</text>
<text class="lv" text-anchor="middle" transform="translate(2.2,277.51) rotate(90)" dy="1.3">0</text>
<text class="lv" text-anchor="middle" transform="translate(2.2,281.81) rotate(90)" dy="1.3">0</text>
<line x1="0" y1="286.38" x2="8.5" y2="286.38" stroke="#6a6a6a" stroke-width="0.6"/>
<text class="lv" text-anchor="middle" transform="translate(2.2,290.27) rotate(90)" dy="1.3">7</text>
<text class="lv" text-anchor="middle" transform="translate(2.2,294.57) rotate(90)" dy="1.3">5</text>
<text class="lv" text-anchor="middle" transform="translate(2.2,298.88) rotate(90)" dy="1.3">0</text>
<line x1="0" y1="303.44" x2="8.5" y2="303.44" stroke="#6a6a6a" stroke-width="0.6"/>
<text class="lv" text-anchor="middle" transform="translate(2.2,307.34) rotate(90)" dy="1.3">8</text>
<text class="lv" text-anchor="middle" transform="translate(2.2,311.64) rotate(90)" dy="1.3">0</text>
<text class="lv" text-anchor="middle" transform="translate(2.2,315.94) rotate(90)" dy="1.3">0</text>
<line x1="0" y1="320.50" x2="8.5" y2="320.50" stroke="#6a6a6a" stroke-width="0.6"/>
<text class="lv" text-anchor="middle" transform="translate(2.2,324.40) rotate(90)" dy="1.3">8</text>
<text class="lv" text-anchor="middle" transform="translate(2.2,328.70) rotate(90)" dy="1.3">5</text>
<text class="lv" text-anchor="middle" transform="translate(2.2,333.00) rotate(90)" dy="1.3">0</text>
<line x1="0" y1="337.57" x2="8.5" y2="337.57" stroke="#6a6a6a" stroke-width="0.6"/>
<text class="lv" text-anchor="middle" transform="translate(2.2,341.47) rotate(90)" dy="1.3">9</text>
<text class="lv" text-anchor="middle" transform="translate(2.2,345.77) rotate(90)" dy="1.3">0</text>
<text class="lv" text-anchor="middle" transform="translate(2.2,350.07) rotate(90)" dy="1.3">0</text>
<line x1="0" y1="354.63" x2="8.5" y2="354.63" stroke="#6a6a6a" stroke-width="0.6"/>
<text class="lv" text-anchor="middle" transform="translate(2.2,358.53) rotate(90)" dy="1.3">9</text>
<text class="lv" text-anchor="middle" transform="translate(2.2,362.83) rotate(90)" dy="1.3">5</text>
<text class="lv" text-anchor="middle" transform="translate(2.2,367.13) rotate(90)" dy="1.3">0</text>
<line x1="0" y1="371.70" x2="8.5" y2="371.70" stroke="#6a6a6a" stroke-width="0.6"/>
<text class="lv" text-anchor="middle" transform="translate(2.2,375.60) rotate(90)" dy="1.3">1</text>
<text class="lv" text-anchor="middle" transform="translate(2.2,379.90) rotate(90)" dy="1.3">0</text>
<text class="lv" text-anchor="middle" transform="translate(2.2,384.20) rotate(90)" dy="1.3">0</text>
<text class="lv" text-anchor="middle" transform="translate(2.2,388.50) rotate(90)" dy="1.3">0</text>
<line x1="0" y1="388.76" x2="8.5" y2="388.76" stroke="#6a6a6a" stroke-width="0.6"/>
<text class="lv" text-anchor="middle" transform="translate(2.2,392.66) rotate(90)" dy="1.3">1</text>
<text class="lv" text-anchor="middle" transform="translate(2.2,396.96) rotate(90)" dy="1.3">0</text>
<text class="lv" text-anchor="middle" transform="translate(2.2,401.26) rotate(90)" dy="1.3">5</text>
<text class="lv" text-anchor="middle" transform="translate(2.2,405.56) rotate(90)" dy="1.3">0</text>
<line x1="0" y1="405.83" x2="8.5" y2="405.83" stroke="#6a6a6a" stroke-width="0.6"/>
<text class="lv" text-anchor="middle" transform="translate(2.2,409.73) rotate(90)" dy="1.3">1</text>
<text class="lv" text-anchor="middle" transform="translate(2.2,414.03) rotate(90)" dy="1.3">1</text>
<text class="lv" text-anchor="middle" transform="translate(2.2,418.33) rotate(90)" dy="1.3">0</text>
<text class="lv" text-anchor="middle" transform="translate(2.2,422.63) rotate(90)" dy="1.3">0</text>
<line x1="7.20" y1="32.53" x2="8.5" y2="32.53" stroke="#9a9a9a" stroke-width="0.6"/>
<line x1="7.20" y1="34.67" x2="8.5" y2="34.67" stroke="#9a9a9a" stroke-width="0.6"/>
<line x1="7.20" y1="36.80" x2="8.5" y2="36.80" stroke="#9a9a9a" stroke-width="0.6"/>
<line x1="6.30" y1="38.93" x2="8.5" y2="38.93" stroke="#9a9a9a" stroke-width="0.6"/>
<line x1="7.20" y1="41.07" x2="8.5" y2="41.07" stroke="#9a9a9a" stroke-width="0.6"/>
<line x1="7.20" y1="43.20" x2="8.5" y2="43.20" stroke="#9a9a9a" stroke-width="0.6"/>
<line x1="7.20" y1="45.33" x2="8.5" y2="45.33" stroke="#9a9a9a" stroke-width="0.6"/>
<line x1="7.20" y1="49.60" x2="8.5" y2="49.60" stroke="#9a9a9a" stroke-width="0.6"/>
<line x1="7.20" y1="51.73" x2="8.5" y2="51.73" stroke="#9a9a9a" stroke-width="0.6"/>
<line x1="7.20" y1="53.86" x2="8.5" y2="53.86" stroke="#9a9a9a" stroke-width="0.6"/>
<line x1="6.30" y1="56.00" x2="8.5" y2="56.00" stroke="#9a9a9a" stroke-width="0.6"/>
<line x1="7.20" y1="58.13" x2="8.5" y2="58.13" stroke="#9a9a9a" stroke-width="0.6"/>
<line x1="7.20" y1="60.26" x2="8.5" y2="60.26" stroke="#9a9a9a" stroke-width="0.6"/>
<line x1="7.20" y1="62.40" x2="8.5" y2="62.40" stroke="#9a9a9a" stroke-width="0.6"/>
<line x1="7.20" y1="66.66" x2="8.5" y2="66.66" stroke="#9a9a9a" stroke-width="0.6"/>
<line x1="7.20" y1="68.80" x2="8.5" y2="68.80" stroke="#9a9a9a" stroke-width="0.6"/>
<line x1="7.20" y1="70.93" x2="8.5" y2="70.93" stroke="#9a9a9a" stroke-width="0.6"/>
<line x1="6.30" y1="73.06" x2="8.5" y2="73.06" stroke="#9a9a9a" stroke-width="0.6"/>
<line x1="7.20" y1="75.20" x2="8.5" y2="75.20" stroke="#9a9a9a" stroke-width="0.6"/>
<line x1="7.20" y1="77.33" x2="8.5" y2="77.33" stroke="#9a9a9a" stroke-width="0.6"/>
<line x1="7.20" y1="79.46" x2="8.5" y2="79.46" stroke="#9a9a9a" stroke-width="0.6"/>
<line x1="7.20" y1="83.73" x2="8.5" y2="83.73" stroke="#9a9a9a" stroke-width="0.6"/>
<line x1="7.20" y1="85.86" x2="8.5" y2="85.86" stroke="#9a9a9a" stroke-width="0.6"/>
<line x1="7.20" y1="87.99" x2="8.5" y2="87.99" stroke="#9a9a9a" stroke-width="0.6"/>
<line x1="6.30" y1="90.13" x2="8.5" y2="90.13" stroke="#9a9a9a" stroke-width="0.6"/>
<line x1="7.20" y1="92.26" x2="8.5" y2="92.26" stroke="#9a9a9a" stroke-width="0.6"/>
<line x1="7.20" y1="94.39" x2="8.5" y2="94.39" stroke="#9a9a9a" stroke-width="0.6"/>
<line x1="7.20" y1="96.53" x2="8.5" y2="96.53" stroke="#9a9a9a" stroke-width="0.6"/>
<line x1="7.20" y1="100.79" x2="8.5" y2="100.79" stroke="#9a9a9a" stroke-width="0.6"/>
<line x1="7.20" y1="102.93" x2="8.5" y2="102.93" stroke="#9a9a9a" stroke-width="0.6"/>
<line x1="7.20" y1="105.06" x2="8.5" y2="105.06" stroke="#9a9a9a" stroke-width="0.6"/>
<line x1="6.30" y1="107.19" x2="8.5" y2="107.19" stroke="#9a9a9a" stroke-width="0.6"/>
<line x1="7.20" y1="109.33" x2="8.5" y2="109.33" stroke="#9a9a9a" stroke-width="0.6"/>
<line x1="7.20" y1="111.46" x2="8.5" y2="111.46" stroke="#9a9a9a" stroke-width="0.6"/>
<line x1="7.20" y1="113.59" x2="8.5" y2="113.59" stroke="#9a9a9a" stroke-width="0.6"/>
<line x1="7.20" y1="117.86" x2="8.5" y2="117.86" stroke="#9a9a9a" stroke-width="0.6"/>
<line x1="7.20" y1="119.99" x2="8.5" y2="119.99" stroke="#9a9a9a" stroke-width="0.6"/>
<line x1="7.20" y1="122.12" x2="8.5" y2="122.12" stroke="#9a9a9a" stroke-width="0.6"/>
<line x1="6.30" y1="124.26" x2="8.5" y2="124.26" stroke="#9a9a9a" stroke-width="0.6"/>
<line x1="7.20" y1="126.39" x2="8.5" y2="126.39" stroke="#9a9a9a" stroke-width="0.6"/>
<line x1="7.20" y1="128.52" x2="8.5" y2="128.52" stroke="#9a9a9a" stroke-width="0.6"/>
<line x1="7.20" y1="130.66" x2="8.5" y2="130.66" stroke="#9a9a9a" stroke-width="0.6"/>
<line x1="7.20" y1="134.92" x2="8.5" y2="134.92" stroke="#9a9a9a" stroke-width="0.6"/>
<line x1="7.20" y1="137.06" x2="8.5" y2="137.06" stroke="#9a9a9a" stroke-width="0.6"/>
<line x1="7.20" y1="139.19" x2="8.5" y2="139.19" stroke="#9a9a9a" stroke-width="0.6"/>
<line x1="6.30" y1="141.32" x2="8.5" y2="141.32" stroke="#9a9a9a" stroke-width="0.6"/>
<line x1="7.20" y1="143.46" x2="8.5" y2="143.46" stroke="#9a9a9a" stroke-width="0.6"/>
<line x1="7.20" y1="145.59" x2="8.5" y2="145.59" stroke="#9a9a9a" stroke-width="0.6"/>
<line x1="7.20" y1="147.72" x2="8.5" y2="147.72" stroke="#9a9a9a" stroke-width="0.6"/>
<line x1="7.20" y1="151.99" x2="8.5" y2="151.99" stroke="#9a9a9a" stroke-width="0.6"/>
<line x1="7.20" y1="154.12" x2="8.5" y2="154.12" stroke="#9a9a9a" stroke-width="0.6"/>
<line x1="7.20" y1="156.25" x2="8.5" y2="156.25" stroke="#9a9a9a" stroke-width="0.6"/>
<line x1="6.30" y1="158.39" x2="8.5" y2="158.39" stroke="#9a9a9a" stroke-width="0.6"/>
<line x1="7.20" y1="160.52" x2="8.5" y2="160.52" stroke="#9a9a9a" stroke-width="0.6"/>
<line x1="7.20" y1="162.65" x2="8.5" y2="162.65" stroke="#9a9a9a" stroke-width="0.6"/>
<line x1="7.20" y1="164.79" x2="8.5" y2="164.79" stroke="#9a9a9a" stroke-width="0.6"/>
<line x1="7.20" y1="169.05" x2="8.5" y2="169.05" stroke="#9a9a9a" stroke-width="0.6"/>
<line x1="7.20" y1="171.19" x2="8.5" y2="171.19" stroke="#9a9a9a" stroke-width="0.6"/>
<line x1="7.20" y1="173.32" x2="8.5" y2="173.32" stroke="#9a9a9a" stroke-width="0.6"/>
<line x1="6.30" y1="175.45" x2="8.5" y2="175.45" stroke="#9a9a9a" stroke-width="0.6"/>
<line x1="7.20" y1="177.59" x2="8.5" y2="177.59" stroke="#9a9a9a" stroke-width="0.6"/>
<line x1="7.20" y1="179.72" x2="8.5" y2="179.72" stroke="#9a9a9a" stroke-width="0.6"/>
<line x1="7.20" y1="181.85" x2="8.5" y2="181.85" stroke="#9a9a9a" stroke-width="0.6"/>
<line x1="7.20" y1="186.12" x2="8.5" y2="186.12" stroke="#9a9a9a" stroke-width="0.6"/>
<line x1="7.20" y1="188.25" x2="8.5" y2="188.25" stroke="#9a9a9a" stroke-width="0.6"/>
<line x1="7.20" y1="190.38" x2="8.5" y2="190.38" stroke="#9a9a9a" stroke-width="0.6"/>
<line x1="6.30" y1="192.52" x2="8.5" y2="192.52" stroke="#9a9a9a" stroke-width="0.6"/>
<line x1="7.20" y1="194.65" x2="8.5" y2="194.65" stroke="#9a9a9a" stroke-width="0.6"/>
<line x1="7.20" y1="196.78" x2="8.5" y2="196.78" stroke="#9a9a9a" stroke-width="0.6"/>
<line x1="7.20" y1="198.92" x2="8.5" y2="198.92" stroke="#9a9a9a" stroke-width="0.6"/>
<line x1="7.20" y1="203.18" x2="8.5" y2="203.18" stroke="#9a9a9a" stroke-width="0.6"/>
<line x1="7.20" y1="205.32" x2="8.5" y2="205.32" stroke="#9a9a9a" stroke-width="0.6"/>
<line x1="7.20" y1="207.45" x2="8.5" y2="207.45" stroke="#9a9a9a" stroke-width="0.6"/>
<line x1="6.30" y1="209.58" x2="8.5" y2="209.58" stroke="#9a9a9a" stroke-width="0.6"/>
<line x1="7.20" y1="211.72" x2="8.5" y2="211.72" stroke="#9a9a9a" stroke-width="0.6"/>
<line x1="7.20" y1="213.85" x2="8.5" y2="213.85" stroke="#9a9a9a" stroke-width="0.6"/>
<line x1="7.20" y1="215.98" x2="8.5" y2="215.98" stroke="#9a9a9a" stroke-width="0.6"/>
<line x1="7.20" y1="220.25" x2="8.5" y2="220.25" stroke="#9a9a9a" stroke-width="0.6"/>
<line x1="7.20" y1="222.38" x2="8.5" y2="222.38" stroke="#9a9a9a" stroke-width="0.6"/>
<line x1="7.20" y1="224.51" x2="8.5" y2="224.51" stroke="#9a9a9a" stroke-width="0.6"/>
<line x1="6.30" y1="226.65" x2="8.5" y2="226.65" stroke="#9a9a9a" stroke-width="0.6"/>
<line x1="7.20" y1="228.78" x2="8.5" y2="228.78" stroke="#9a9a9a" stroke-width="0.6"/>
<line x1="7.20" y1="230.91" x2="8.5" y2="230.91" stroke="#9a9a9a" stroke-width="0.6"/>
<line x1="7.20" y1="233.05" x2="8.5" y2="233.05" stroke="#9a9a9a" stroke-width="0.6"/>
<line x1="7.20" y1="237.31" x2="8.5" y2="237.31" stroke="#9a9a9a" stroke-width="0.6"/>
<line x1="7.20" y1="239.45" x2="8.5" y2="239.45" stroke="#9a9a9a" stroke-width="0.6"/>
<line x1="7.20" y1="241.58" x2="8.5" y2="241.58" stroke="#9a9a9a" stroke-width="0.6"/>
<line x1="6.30" y1="243.71" x2="8.5" y2="243.71" stroke="#9a9a9a" stroke-width="0.6"/>
<line x1="7.20" y1="245.85" x2="8.5" y2="245.85" stroke="#9a9a9a" stroke-width="0.6"/>
<line x1="7.20" y1="247.98" x2="8.5" y2="247.98" stroke="#9a9a9a" stroke-width="0.6"/>
<line x1="7.20" y1="250.11" x2="8.5" y2="250.11" stroke="#9a9a9a" stroke-width="0.6"/>
<line x1="7.20" y1="254.38" x2="8.5" y2="254.38" stroke="#9a9a9a" stroke-width="0.6"/>
<line x1="7.20" y1="256.51" x2="8.5" y2="256.51" stroke="#9a9a9a" stroke-width="0.6"/>
<line x1="7.20" y1="258.64" x2="8.5" y2="258.64" stroke="#9a9a9a" stroke-width="0.6"/>
<line x1="6.30" y1="260.78" x2="8.5" y2="260.78" stroke="#9a9a9a" stroke-width="0.6"/>
<line x1="7.20" y1="262.91" x2="8.5" y2="262.91" stroke="#9a9a9a" stroke-width="0.6"/>
<line x1="7.20" y1="265.04" x2="8.5" y2="265.04" stroke="#9a9a9a" stroke-width="0.6"/>
<line x1="7.20" y1="267.18" x2="8.5" y2="267.18" stroke="#9a9a9a" stroke-width="0.6"/>
<line x1="7.20" y1="271.44" x2="8.5" y2="271.44" stroke="#9a9a9a" stroke-width="0.6"/>
<line x1="7.20" y1="273.58" x2="8.5" y2="273.58" stroke="#9a9a9a" stroke-width="0.6"/>
<line x1="7.20" y1="275.71" x2="8.5" y2="275.71" stroke="#9a9a9a" stroke-width="0.6"/>
<line x1="6.30" y1="277.84" x2="8.5" y2="277.84" stroke="#9a9a9a" stroke-width="0.6"/>
<line x1="7.20" y1="279.98" x2="8.5" y2="279.98" stroke="#9a9a9a" stroke-width="0.6"/>
<line x1="7.20" y1="282.11" x2="8.5" y2="282.11" stroke="#9a9a9a" stroke-width="0.6"/>
<line x1="7.20" y1="284.24" x2="8.5" y2="284.24" stroke="#9a9a9a" stroke-width="0.6"/>
<line x1="7.20" y1="288.51" x2="8.5" y2="288.51" stroke="#9a9a9a" stroke-width="0.6"/>
<line x1="7.20" y1="290.64" x2="8.5" y2="290.64" stroke="#9a9a9a" stroke-width="0.6"/>
<line x1="7.20" y1="292.77" x2="8.5" y2="292.77" stroke="#9a9a9a" stroke-width="0.6"/>
<line x1="6.30" y1="294.91" x2="8.5" y2="294.91" stroke="#9a9a9a" stroke-width="0.6"/>
<line x1="7.20" y1="297.04" x2="8.5" y2="297.04" stroke="#9a9a9a" stroke-width="0.6"/>
<line x1="7.20" y1="299.17" x2="8.5" y2="299.17" stroke="#9a9a9a" stroke-width="0.6"/>
<line x1="7.20" y1="301.31" x2="8.5" y2="301.31" stroke="#9a9a9a" stroke-width="0.6"/>
<line x1="7.20" y1="305.57" x2="8.5" y2="305.57" stroke="#9a9a9a" stroke-width="0.6"/>
<line x1="7.20" y1="307.71" x2="8.5" y2="307.71" stroke="#9a9a9a" stroke-width="0.6"/>
<line x1="7.20" y1="309.84" x2="8.5" y2="309.84" stroke="#9a9a9a" stroke-width="0.6"/>
<line x1="6.30" y1="311.97" x2="8.5" y2="311.97" stroke="#9a9a9a" stroke-width="0.6"/>
<line x1="7.20" y1="314.11" x2="8.5" y2="314.11" stroke="#9a9a9a" stroke-width="0.6"/>
<line x1="7.20" y1="316.24" x2="8.5" y2="316.24" stroke="#9a9a9a" stroke-width="0.6"/>
<line x1="7.20" y1="318.37" x2="8.5" y2="318.37" stroke="#9a9a9a" stroke-width="0.6"/>
<line x1="7.20" y1="322.64" x2="8.5" y2="322.64" stroke="#9a9a9a" stroke-width="0.6"/>
<line x1="7.20" y1="324.77" x2="8.5" y2="324.77" stroke="#9a9a9a" stroke-width="0.6"/>
<line x1="7.20" y1="326.90" x2="8.5" y2="326.90" stroke="#9a9a9a" stroke-width="0.6"/>
<line x1="6.30" y1="329.04" x2="8.5" y2="329.04" stroke="#9a9a9a" stroke-width="0.6"/>
<line x1="7.20" y1="331.17" x2="8.5" y2="331.17" stroke="#9a9a9a" stroke-width="0.6"/>
<line x1="7.20" y1="333.30" x2="8.5" y2="333.30" stroke="#9a9a9a" stroke-width="0.6"/>
<line x1="7.20" y1="335.44" x2="8.5" y2="335.44" stroke="#9a9a9a" stroke-width="0.6"/>
<line x1="7.20" y1="339.70" x2="8.5" y2="339.70" stroke="#9a9a9a" stroke-width="0.6"/>
<line x1="7.20" y1="341.84" x2="8.5" y2="341.84" stroke="#9a9a9a" stroke-width="0.6"/>
<line x1="7.20" y1="343.97" x2="8.5" y2="343.97" stroke="#9a9a9a" stroke-width="0.6"/>
<line x1="6.30" y1="346.10" x2="8.5" y2="346.10" stroke="#9a9a9a" stroke-width="0.6"/>
<line x1="7.20" y1="348.24" x2="8.5" y2="348.24" stroke="#9a9a9a" stroke-width="0.6"/>
<line x1="7.20" y1="350.37" x2="8.5" y2="350.37" stroke="#9a9a9a" stroke-width="0.6"/>
<line x1="7.20" y1="352.50" x2="8.5" y2="352.50" stroke="#9a9a9a" stroke-width="0.6"/>
<line x1="7.20" y1="356.77" x2="8.5" y2="356.77" stroke="#9a9a9a" stroke-width="0.6"/>
<line x1="7.20" y1="358.90" x2="8.5" y2="358.90" stroke="#9a9a9a" stroke-width="0.6"/>
<line x1="7.20" y1="361.03" x2="8.5" y2="361.03" stroke="#9a9a9a" stroke-width="0.6"/>
<line x1="6.30" y1="363.17" x2="8.5" y2="363.17" stroke="#9a9a9a" stroke-width="0.6"/>
<line x1="7.20" y1="365.30" x2="8.5" y2="365.30" stroke="#9a9a9a" stroke-width="0.6"/>
<line x1="7.20" y1="367.43" x2="8.5" y2="367.43" stroke="#9a9a9a" stroke-width="0.6"/>
<line x1="7.20" y1="369.57" x2="8.5" y2="369.57" stroke="#9a9a9a" stroke-width="0.6"/>
<line x1="7.20" y1="373.83" x2="8.5" y2="373.83" stroke="#9a9a9a" stroke-width="0.6"/>
<line x1="7.20" y1="375.97" x2="8.5" y2="375.97" stroke="#9a9a9a" stroke-width="0.6"/>
<line x1="7.20" y1="378.10" x2="8.5" y2="378.10" stroke="#9a9a9a" stroke-width="0.6"/>
<line x1="6.30" y1="380.23" x2="8.5" y2="380.23" stroke="#9a9a9a" stroke-width="0.6"/>
<line x1="7.20" y1="382.37" x2="8.5" y2="382.37" stroke="#9a9a9a" stroke-width="0.6"/>
<line x1="7.20" y1="384.50" x2="8.5" y2="384.50" stroke="#9a9a9a" stroke-width="0.6"/>
<line x1="7.20" y1="386.63" x2="8.5" y2="386.63" stroke="#9a9a9a" stroke-width="0.6"/>
<line x1="7.20" y1="390.90" x2="8.5" y2="390.90" stroke="#9a9a9a" stroke-width="0.6"/>
<line x1="7.20" y1="393.03" x2="8.5" y2="393.03" stroke="#9a9a9a" stroke-width="0.6"/>
<line x1="7.20" y1="395.16" x2="8.5" y2="395.16" stroke="#9a9a9a" stroke-width="0.6"/>
<line x1="6.30" y1="397.30" x2="8.5" y2="397.30" stroke="#9a9a9a" stroke-width="0.6"/>
<line x1="7.20" y1="399.43" x2="8.5" y2="399.43" stroke="#9a9a9a" stroke-width="0.6"/>
<line x1="7.20" y1="401.56" x2="8.5" y2="401.56" stroke="#9a9a9a" stroke-width="0.6"/>
<line x1="7.20" y1="403.70" x2="8.5" y2="403.70" stroke="#9a9a9a" stroke-width="0.6"/>
<line x1="7.20" y1="407.96" x2="8.5" y2="407.96" stroke="#9a9a9a" stroke-width="0.6"/>
<line x1="7.20" y1="410.10" x2="8.5" y2="410.10" stroke="#9a9a9a" stroke-width="0.6"/>
<line x1="7.20" y1="412.23" x2="8.5" y2="412.23" stroke="#9a9a9a" stroke-width="0.6"/>
<line x1="6.30" y1="414.36" x2="8.5" y2="414.36" stroke="#9a9a9a" stroke-width="0.6"/>
<line x1="7.20" y1="416.50" x2="8.5" y2="416.50" stroke="#9a9a9a" stroke-width="0.6"/>
<line x1="7.20" y1="418.63" x2="8.5" y2="418.63" stroke="#9a9a9a" stroke-width="0.6"/>
</g>
<rect x="0" y="22.5" width="8.5" height="8.5" fill="#2a2a2a"/>
<line x1="7" y1="22.5" x2="7" y2="31" stroke="#555" stroke-width="0.6"/>
<!-- right bar -->
<rect x="592" y="22.5" width="8" height="406" fill="#1c1c1c"/>
<rect x="594.1" y="22.5" width="3.9" height="406" fill="#2d2d2d"/>
<rect x="598" y="22.5" width="2" height="406" fill="#383838"/>
<!-- canvas -->
<rect x="8.5" y="30.8" width="583.5" height="388.8" fill="#ffffff"/>
<rect x="9.6" y="31.6" width="581.2" height="386.8" fill="#ececec"/>
<!-- status bar -->
<rect x="0" y="419.6" width="592" height="8.4" fill="#1c1c1c"/>
<rect x="0" y="421.4" width="592" height="5.2" fill="#262626"/>
<rect x="0" y="426.6" width="600" height="1.4" fill="#383838"/>
<rect x="0" y="421.4" width="26" height="5.2" fill="#1e1e1e"/>
<rect x="26" y="421.4" width="82" height="5.2" fill="#333"/>
<text x="5" y="426.2" font-size="4.7" fill="#e2e2e2">154.21%</text>
<text x="45" y="426.2" font-size="4.9" fill="#b8b8b8">Doc: 5.55M/7.87M</text>
<text x="104" y="426.2" font-size="5.3" fill="#b8b8b8">&gt;</text>

<!-- shirt -->
<defs>
<clipPath id="sc"><path d="M253.0,70.5 C252.6,69.9 253.2,70.2 251.0,70.4 C248.8,70.7 244.5,71.5 240.0,72.0 C235.5,72.5 228.7,73.0 224.0,73.6 C219.3,74.2 215.0,74.9 212.0,75.6 C209.0,76.3 208.0,76.5 206.0,77.6 C204.0,78.7 202.3,80.1 200.0,82.0 C197.7,83.9 195.3,86.2 192.0,89.0 C188.7,91.8 184.0,95.8 180.0,99.0 C176.0,102.2 171.7,105.5 168.0,108.0 C164.3,110.5 161.2,112.2 158.0,114.0 C154.8,115.8 150.8,117.8 149.0,119.0 C147.2,120.2 147.2,120.4 147.0,121.0 C146.8,121.6 147.4,121.6 148.0,122.5 C148.6,123.4 149.3,125.0 150.3,126.4 C151.3,127.8 152.6,129.3 154.0,131.0 C155.4,132.7 157.0,134.7 158.7,136.6 C160.4,138.5 162.4,140.3 164.3,142.2 C166.2,144.1 168.3,146.1 170.0,147.8 C171.7,149.5 172.7,150.8 174.5,152.5 C176.3,154.2 178.8,156.8 181.0,158.3 C183.2,159.8 185.4,160.6 188.0,161.5 C190.6,162.4 194.4,163.0 196.5,163.8 C198.6,164.6 199.7,165.3 200.7,166.5 C201.7,167.7 201.6,169.1 202.5,170.7 C203.4,172.3 205.2,174.4 206.3,176.3 C207.4,178.2 208.3,179.6 208.8,181.9 C209.3,184.2 209.4,187.0 209.3,190.0 C209.2,193.0 208.9,195.8 208.5,200.0 C208.1,204.2 207.5,208.6 207.0,215.0 C206.5,221.4 206.2,230.7 205.6,238.5 C205.0,246.3 204.1,255.0 203.5,261.9 C202.9,268.8 202.7,274.8 202.1,280.0 C201.5,285.2 200.8,287.3 199.8,293.4 C198.8,299.5 197.7,309.0 196.3,316.8 C194.9,324.6 193.1,333.5 191.6,340.2 C190.1,346.9 188.6,353.0 187.5,357.0 C186.4,361.0 185.6,361.9 184.8,364.0 C184.0,366.1 181.4,368.1 182.6,369.4 C183.8,370.7 186.6,370.8 191.7,371.6 C196.8,372.4 206.1,373.3 213.3,374.4 C220.5,375.5 227.8,377.1 235.0,378.1 C242.2,379.1 249.5,379.7 256.7,380.3 C263.9,380.9 271.1,381.3 278.3,381.6 C285.5,381.9 294.4,381.9 300.0,382.0 C305.6,382.1 306.1,382.4 311.7,382.3 C317.2,382.2 326.1,381.9 333.3,381.6 C340.5,381.3 347.8,380.9 355.0,380.3 C362.2,379.7 370.2,378.7 376.7,378.1 C383.2,377.5 389.7,377.2 394.0,376.6 C398.3,376.0 401.3,375.1 402.7,374.4 C404.1,373.7 402.9,375.2 402.5,372.5 C402.1,369.8 401.6,365.3 400.5,358.2 C399.4,351.1 397.7,339.1 396.2,330.0 C394.7,320.9 392.8,311.7 391.6,303.4 C390.4,295.1 389.8,286.9 388.8,280.0 C387.9,273.1 386.8,268.8 385.9,261.9 C385.0,255.0 383.8,246.3 383.6,238.5 C383.4,230.7 384.3,221.4 384.8,215.0 C385.3,208.6 386.3,203.5 386.8,200.0 C387.3,196.5 387.4,196.5 387.8,194.0 C388.2,191.5 388.7,187.4 389.1,185.0 C389.5,182.6 389.5,181.6 390.4,179.8 C391.3,178.1 393.0,176.1 394.5,174.5 C396.0,172.9 397.4,171.5 399.2,170.4 C400.9,169.3 403.1,168.8 405.0,168.1 C406.9,167.4 409.3,167.3 410.9,166.4 C412.5,165.5 413.4,164.5 414.4,162.9 C415.4,161.3 415.9,159.1 416.7,157.0 C417.5,154.9 417.9,152.3 419.3,150.6 C420.7,148.8 423.1,147.9 425.2,146.5 C427.3,145.1 430.1,144.0 432.2,142.4 C434.3,140.8 436.1,139.1 438.0,137.1 C439.9,135.1 442.1,132.6 443.9,130.7 C445.7,128.8 447.4,127.0 448.6,125.4 C449.8,123.9 450.6,122.3 450.9,121.4 C451.2,120.5 450.9,120.8 450.3,120.2 C449.7,119.6 449.7,119.6 447.0,117.8 C444.3,116.0 438.3,112.1 434.0,109.2 C429.7,106.3 425.3,103.4 421.0,100.5 C416.7,97.6 412.3,94.7 408.0,91.8 C403.7,88.9 398.2,85.2 395.0,83.2 C391.8,81.2 391.4,81.0 388.5,79.9 C385.6,78.8 382.0,78.0 377.7,76.7 C373.4,75.4 367.6,73.6 362.5,72.3 C357.4,71.0 350.4,69.7 347.3,69.1 C344.2,68.5 345.2,68.4 344.0,68.6 C342.8,68.8 341.6,69.7 340.3,70.5 C339.1,71.3 338.2,72.4 336.5,73.4 C334.8,74.4 332.1,75.6 330.0,76.7 C327.9,77.8 327.3,78.9 323.8,79.8 C320.3,80.7 314.7,81.6 309.2,82.0 C303.7,82.4 296.9,82.5 290.8,82.4 C284.7,82.3 277.7,82.3 272.5,81.6 C267.3,80.9 262.9,79.6 259.7,78.3 C256.5,77.0 254.3,75.0 253.2,73.8 C252.1,72.5 253.4,71.1 253.0,70.5Z"/></clipPath>
<filter id="b2" x="-50%" y="-50%" width="200%" height="200%"><feGaussianBlur stdDeviation="2"/></filter>
<filter id="b4" x="-50%" y="-50%" width="200%" height="200%"><feGaussianBlur stdDeviation="4"/></filter>
<filter id="b8" x="-50%" y="-50%" width="200%" height="200%"><feGaussianBlur stdDeviation="8"/></filter>
<filter id="b1" x="-50%" y="-50%" width="200%" height="200%"><feGaussianBlur stdDeviation="0.8"/></filter>
<filter id="noise2" x="0" y="0" width="100%" height="100%">
<feTurbulence type="fractalNoise" baseFrequency="0.12" numOctaves="2" seed="3" result="n"/>
<feColorMatrix in="n" type="matrix" values="0 0 0 0 0.27  0 0 0 0 0.74  0 0 0 0 0.64  0 0 0 -2.6 1.5"/>
</filter>
<filter id="noise" x="0" y="0" width="100%" height="100%">
<feTurbulence type="fractalNoise" baseFrequency="0.04 0.1" numOctaves="3" seed="5" result="n"/>
<feColorMatrix in="n" type="matrix" values="0 0 0 0 0.28  0 0 0 0 0.75  0 0 0 0 0.65  0 0 0 -2.0 1.15"/>
</filter>
</defs>
<path fill="#62d7ba" d="M253.0,70.5 C252.6,69.9 253.2,70.2 251.0,70.4 C248.8,70.7 244.5,71.5 240.0,72.0 C235.5,72.5 228.7,73.0 224.0,73.6 C219.3,74.2 215.0,74.9 212.0,75.6 C209.0,76.3 208.0,76.5 206.0,77.6 C204.0,78.7 202.3,80.1 200.0,82.0 C197.7,83.9 195.3,86.2 192.0,89.0 C188.7,91.8 184.0,95.8 180.0,99.0 C176.0,102.2 171.7,105.5 168.0,108.0 C164.3,110.5 161.2,112.2 158.0,114.0 C154.8,115.8 150.8,117.8 149.0,119.0 C147.2,120.2 147.2,120.4 147.0,121.0 C146.8,121.6 147.4,121.6 148.0,122.5 C148.6,123.4 149.3,125.0 150.3,126.4 C151.3,127.8 152.6,129.3 154.0,131.0 C155.4,132.7 157.0,134.7 158.7,136.6 C160.4,138.5 162.4,140.3 164.3,142.2 C166.2,144.1 168.3,146.1 170.0,147.8 C171.7,149.5 172.7,150.8 174.5,152.5 C176.3,154.2 178.8,156.8 181.0,158.3 C183.2,159.8 185.4,160.6 188.0,161.5 C190.6,162.4 194.4,163.0 196.5,163.8 C198.6,164.6 199.7,165.3 200.7,166.5 C201.7,167.7 201.6,169.1 202.5,170.7 C203.4,172.3 205.2,174.4 206.3,176.3 C207.4,178.2 208.3,179.6 208.8,181.9 C209.3,184.2 209.4,187.0 209.3,190.0 C209.2,193.0 208.9,195.8 208.5,200.0 C208.1,204.2 207.5,208.6 207.0,215.0 C206.5,221.4 206.2,230.7 205.6,238.5 C205.0,246.3 204.1,255.0 203.5,261.9 C202.9,268.8 202.7,274.8 202.1,280.0 C201.5,285.2 200.8,287.3 199.8,293.4 C198.8,299.5 197.7,309.0 196.3,316.8 C194.9,324.6 193.1,333.5 191.6,340.2 C190.1,346.9 188.6,353.0 187.5,357.0 C186.4,361.0 185.6,361.9 184.8,364.0 C184.0,366.1 181.4,368.1 182.6,369.4 C183.8,370.7 186.6,370.8 191.7,371.6 C196.8,372.4 206.1,373.3 213.3,374.4 C220.5,375.5 227.8,377.1 235.0,378.1 C242.2,379.1 249.5,379.7 256.7,380.3 C263.9,380.9 271.1,381.3 278.3,381.6 C285.5,381.9 294.4,381.9 300.0,382.0 C305.6,382.1 306.1,382.4 311.7,382.3 C317.2,382.2 326.1,381.9 333.3,381.6 C340.5,381.3 347.8,380.9 355.0,380.3 C362.2,379.7 370.2,378.7 376.7,378.1 C383.2,377.5 389.7,377.2 394.0,376.6 C398.3,376.0 401.3,375.1 402.7,374.4 C404.1,373.7 402.9,375.2 402.5,372.5 C402.1,369.8 401.6,365.3 400.5,358.2 C399.4,351.1 397.7,339.1 396.2,330.0 C394.7,320.9 392.8,311.7 391.6,303.4 C390.4,295.1 389.8,286.9 388.8,280.0 C387.9,273.1 386.8,268.8 385.9,261.9 C385.0,255.0 383.8,246.3 383.6,238.5 C383.4,230.7 384.3,221.4 384.8,215.0 C385.3,208.6 386.3,203.5 386.8,200.0 C387.3,196.5 387.4,196.5 387.8,194.0 C388.2,191.5 388.7,187.4 389.1,185.0 C389.5,182.6 389.5,181.6 390.4,179.8 C391.3,178.1 393.0,176.1 394.5,174.5 C396.0,172.9 397.4,171.5 399.2,170.4 C400.9,169.3 403.1,168.8 405.0,168.1 C406.9,167.4 409.3,167.3 410.9,166.4 C412.5,165.5 413.4,164.5 414.4,162.9 C415.4,161.3 415.9,159.1 416.7,157.0 C417.5,154.9 417.9,152.3 419.3,150.6 C420.7,148.8 423.1,147.9 425.2,146.5 C427.3,145.1 430.1,144.0 432.2,142.4 C434.3,140.8 436.1,139.1 438.0,137.1 C439.9,135.1 442.1,132.6 443.9,130.7 C445.7,128.8 447.4,127.0 448.6,125.4 C449.8,123.9 450.6,122.3 450.9,121.4 C451.2,120.5 450.9,120.8 450.3,120.2 C449.7,119.6 449.7,119.6 447.0,117.8 C444.3,116.0 438.3,112.1 434.0,109.2 C429.7,106.3 425.3,103.4 421.0,100.5 C416.7,97.6 412.3,94.7 408.0,91.8 C403.7,88.9 398.2,85.2 395.0,83.2 C391.8,81.2 391.4,81.0 388.5,79.9 C385.6,78.8 382.0,78.0 377.7,76.7 C373.4,75.4 367.6,73.6 362.5,72.3 C357.4,71.0 350.4,69.7 347.3,69.1 C344.2,68.5 345.2,68.4 344.0,68.6 C342.8,68.8 341.6,69.7 340.3,70.5 C339.1,71.3 338.2,72.4 336.5,73.4 C334.8,74.4 332.1,75.6 330.0,76.7 C327.9,77.8 327.3,78.9 323.8,79.8 C320.3,80.7 314.7,81.6 309.2,82.0 C303.7,82.4 296.9,82.5 290.8,82.4 C284.7,82.3 277.7,82.3 272.5,81.6 C267.3,80.9 262.9,79.6 259.7,78.3 C256.5,77.0 254.3,75.0 253.2,73.8 C252.1,72.5 253.4,71.1 253.0,70.5Z"/>
<g clip-path="url(#sc)">
<g transform="rotate(60 300 220)"><rect x="60" y="0" width="480" height="440" filter="url(#noise)" opacity="0.35"/></g>
<rect x="140" y="60" width="320" height="330" filter="url(#noise2)" opacity="0.35"/>
<!-- large-scale darker zones -->
<g fill="#4dc3a6" opacity="0.5">
<path d="M203,162 C216,178 224,205 221,240 C216,270 212,300 206,330 L194,330 L200,160 Z" filter="url(#b8)"/>
<path d="M362,172 C372,200 370,232 378,262 L393,262 L393,170 Z" filter="url(#b8)"/>
<path d="M300,300 C330,300 360,290 395,295 L402,350 C372,345 335,345 300,340 Z" filter="url(#b8)"/>
<path d="M215,240 C235,270 245,300 260,330 L215,340 Z" filter="url(#b8)"/>
</g>
<g fill="none" stroke="#49bfa2" opacity="0.6">
<path d="M292,200 C262,215 245,240 250,275 C255,305 280,330 315,352" stroke-width="8" filter="url(#b4)"/>
<path d="M384,200 C380,230 372,262 360,285 C350,303 340,318 330,330" stroke-width="6" filter="url(#b4)"/>
<path d="M355,150 C340,180 320,205 300,222" stroke-width="4" filter="url(#b4)"/>
<path d="M225,120 C245,135 270,150 300,160" stroke-width="3" filter="url(#b4)"/>
<path d="M338,196 C325,215 312,232 295,246" stroke-width="5" filter="url(#b4)"/>
</g>
<!-- lighter chest -->
<ellipse cx="290" cy="150" rx="70" ry="38" fill="#76dec6" opacity="0.35" filter="url(#b8)"/>
<ellipse cx="300" cy="260" rx="30" ry="35" fill="#76dec6" opacity="0.3" filter="url(#b8)"/>
<!-- inside neck -->
<path d="M254,74 C262,80 280,83 300,83 C320,83 334,80 341,71 L341,82 C334,95 318,103 300,104 C282,104 266,97 256,84 Z" fill="#4cbea1"/>
<path d="M255,77.5 C265,83.5 282,85.8 300,85.8 C318,85.8 333,83.5 340,74.5" fill="none" stroke="#66d4b9" stroke-width="6" filter="url(#b1)"/>
<path d="M259,87.5 C270,89 288,89.5 300,89.5 C314,89.5 328,89 338,87" fill="none" stroke="#74dac2" stroke-width="0.8" opacity="0.6"/>
<!-- collar band -->
<path d="M251,71 C255,86 272,104 300,106 C328,106 342,88 345,69" fill="none" stroke="#7addc6" stroke-width="8"/>
<path d="M255,73 C259,86 274,101.5 300,102.5 C326,102.5 339,88 342,71" fill="none" stroke="#5acbae" stroke-width="0.8" opacity="0.7"/>
<path d="M246,73 C250,93 272,112 300,112 C330,111 347,93 350,71" fill="none" stroke="#52c6a9" stroke-width="1" opacity="0.7" filter="url(#b1)"/>
<!-- shoulder seams -->
<path d="M206,78 C199,100 198,130 202,150 C203,156 205,160 206,165" fill="none" stroke="#7cdec6" stroke-width="2.2" filter="url(#b1)"/>
<path d="M209,79 C202,100 201,130 205,150 C206,156 208,160 209,166" fill="none" stroke="#50c5a7" stroke-width="1.3" opacity="0.7" filter="url(#b1)"/>
<path d="M390,80 C385,100 382,125 384,145 C386,158 390,166 394,171" fill="none" stroke="#7cdec6" stroke-width="2.2" filter="url(#b1)"/>
<path d="M386,80 C381,100 378,125 380,145 C382,158 386,166 390,172" fill="none" stroke="#50c5a7" stroke-width="1.3" opacity="0.7" filter="url(#b1)"/>
<!-- sleeve cuffs -->
<path d="M146,124 C160,138 182,152 205,162" fill="none" stroke="#84e2cc" stroke-width="7" opacity="0.85" filter="url(#b1)"/>
<path d="M149,117 C155,123 161,128 167,131.5 C173,135 178,138 182,140.5 C190,145 197,149 204,153" fill="none" stroke="#3cb497" stroke-width="1.6" filter="url(#b1)"/>
<path d="M180,142 L205,153 L207,168 L190,161 Z" fill="#46bc9f" opacity="0.55" filter="url(#b2)"/>
<path d="M450,124 C440,136 428,145 416,152" fill="none" stroke="#84e2cc" stroke-width="7" opacity="0.85" filter="url(#b1)"/>
<path d="M444,118 C435,128 424,137 411,143" fill="none" stroke="#3cb497" stroke-width="1.6" filter="url(#b1)"/>
<path d="M391,142 C402,148 410,150 416,148 L414,166 L395,172 Z" fill="#46bc9f" opacity="0.5" filter="url(#b4)"/>
<path d="M365,88 L386,82 L384,150 L390,175 L365,180 Z" fill="#4cc2a5" opacity="0.45" filter="url(#b4)"/>
<path d="M208,78 L226,84 L224,170 L207,175 L204,150 Z" fill="#4cc2a5" opacity="0.35" filter="url(#b4)"/>
<!-- hem -->
<path d="M186,358.5 C240,360 280,361 300,361.3 C340,361.8 370,362 402,361.5" fill="none" stroke="#4cc2a4" stroke-width="1.1" opacity="0.75" filter="url(#b1)"/>
<path d="M186,360.5 C240,362 280,363 300,363.3 C340,363.8 370,364 402,363.5" fill="none" stroke="#7cdec6" stroke-width="1" opacity="0.6"/>
<path d="M183,366 C230,370 280,372 300,372 C340,372 370,370 402,367" fill="none" stroke="#76dec6" stroke-width="6" opacity="0.45" filter="url(#b2)"/>
</g>
<rect x="294.6" y="91.6" width="11.2" height="11.2" fill="#e6f6f0"/>
<rect x="295.4" y="92.4" width="9.6" height="9.6" fill="#f2faf7"/>

<!-- layers panel -->
<g id="panel">
<rect x="475.7" y="288.7" width="105.6" height="129.3" rx="1.8" fill="#161616"/>
<rect x="476" y="289" width="105" height="128.7" rx="1.5" fill="#262626"/>
<rect x="476" y="289" width="105" height="6" rx="1.5" fill="#1d1d1d"/>
<rect x="476" y="294.5" width="105" height="12.7" fill="#1f1f1f"/>
<rect x="476" y="294.5" width="22.6" height="12.7" fill="#2b2b2b"/>
<text x="480.4" y="303.6" font-size="5" font-weight="bold" fill="#e4e4e4">Layers</text>
<path d="M479.2,291.4 l2,2 M481.2,291.4 l-2,2" stroke="#8a8a8a" stroke-width="0.6"/>
<path d="M575.5,291.3 v1.8 M577,291.3 v1.8" stroke="#8a8a8a" stroke-width="0.6"/>
<rect x="574" y="299" width="4.4" height="4.2" fill="#5c5c5c"/>
<path d="M574.5,300.1 h3.4 M574.5,301.1 h3.4 M574.5,302.1 h3.4" stroke="#3a3a3a" stroke-width="0.35"/>
<rect x="476" y="307.2" width="105" height="110.5" fill="#2a2a2a"/>
<!-- kind row -->
<rect x="478.8" y="311.9" width="36.8" height="7.6" fill="#222" stroke="#2f2f2f" stroke-width="0.5"/>
<text x="487.5" y="317.6" font-size="4.9" fill="#e0e0e0">Kind</text>
<circle cx="483.3" cy="315.2" r="1.5" fill="none" stroke="#d0d0d0" stroke-width="0.7"/>
<line x1="484.3" y1="316.3" x2="485.5" y2="317.7" stroke="#d0d0d0" stroke-width="0.8"/>
<path d="M511.5,314.8 l1.3,1.4 l1.3,-1.4" fill="none" stroke="#bbb" stroke-width="0.6"/>
<rect x="522.2" y="313.4" width="5.8" height="4.3" fill="none" stroke="#d0d0d0" stroke-width="0.7"/>
<path d="M522.6,317.4 l1.8,-1.6 l1.2,0.9 l1,-0.6 l1.1,1.3 z" fill="#d0d0d0"/>
<circle cx="535.2" cy="315.5" r="2.5" fill="#e4e4e4"/>
<path d="M533.6,313.9 a2.26,2.26 0 0 1 3.2,3.2 z" fill="#2a2a2a"/>
<path d="M543.6,313.2 h4.4 v1.1 h-1.55 v2.5 h0.6 v1 h-2.5 v-1 h0.6 v-2.5 h-1.55 z" fill="#d8d8d8"/>
<rect x="553.9" y="313.2" width="5.2" height="4.6" fill="#cfcfcf"/>
<rect x="555.2" y="313.9" width="2.6" height="3.2" fill="#3a3a3a"/>
<path d="M565,317.8 v-2.6 l1.6,-1.9 h2.3 l1.4,1.5 v3 z" fill="#d8d8d8"/>
<path d="M565.9,315.4 h3.6 v-1.4" fill="none" stroke="#2a2a2a" stroke-width="0.45"/>
<rect x="575.3" y="313.2" width="3.8" height="6.5" rx="1.9" fill="#1e1e1e" stroke="#4e4e4e" stroke-width="0.45"/>
<circle cx="577.2" cy="313.6" r="1.6" fill="#e8e8e8"/>
<line x1="476" y1="322.4" x2="581" y2="322.4" stroke="#242424" stroke-width="0.8"/>
<!-- normal row -->
<rect x="478.8" y="324.6" width="55.5" height="6.7" fill="#232323" stroke="#303030" stroke-width="0.5"/>
<text x="480.6" y="329.8" font-size="5" fill="#e0e0e0">Normal</text>
<path d="M531.3,327.2 l1.2,1.3 l1.2,-1.3" fill="none" stroke="#bbb" stroke-width="0.6"/>
<text x="536.9" y="330" font-size="4.8" fill="#c4c4c4">Opacity:</text>
<rect x="556.4" y="324.8" width="15.6" height="6.5" fill="#202020" stroke="#333" stroke-width="0.5"/>
<text transform="translate(557.8,330) scale(0.86,1)" font-size="4.8" fill="#d0d0d0">100%</text>
<rect x="572.9" y="324.8" width="6.1" height="6.5" fill="#202020" stroke="#333" stroke-width="0.5"/>
<path d="M574.6,327.5 l1.3,1.2 l1.3,-1.2" fill="none" stroke="#c8c8c8" stroke-width="0.6"/>
<line x1="476" y1="334" x2="581" y2="334" stroke="#242424" stroke-width="0.8"/>
<!-- lock row -->
<text x="478.7" y="342.5" font-size="4.9" fill="#bcbcbc">Lock:</text>
<rect x="492.9" y="337.7" width="5.2" height="5.2" fill="#dedede"/>
<rect x="492.90" y="339.00" width="1.30" height="1.30" fill="#333"/>
<rect x="492.90" y="341.60" width="1.30" height="1.30" fill="#333"/>
<rect x="494.20" y="337.70" width="1.30" height="1.30" fill="#333"/>
<rect x="494.20" y="340.30" width="1.30" height="1.30" fill="#333"/>
<rect x="495.50" y="339.00" width="1.30" height="1.30" fill="#333"/>
<rect x="495.50" y="341.60" width="1.30" height="1.30" fill="#333"/>
<rect x="496.80" y="337.70" width="1.30" height="1.30" fill="#333"/>
<rect x="496.80" y="340.30" width="1.30" height="1.30" fill="#333"/>
<path d="M508.2,337.4 L504.2,341.7" stroke="#dcdcdc" stroke-width="0.75"/>
<ellipse cx="503.6" cy="342.3" rx="1.5" ry="0.9" transform="rotate(-45 503.6 342.3)" fill="#ececec"/>
<path d="M514.6,337.8 v5.2 M512,340.4 h5.2" stroke="#d8d8d8" stroke-width="0.7"/>
<path d="M514.6,337.5 l-0.9,1 h1.8 z M514.6,343.3 l-0.9,-1 h1.8 z M511.7,340.4 l1,-0.9 v1.8 z M517.5,340.4 l-1,-0.9 v1.8 z" fill="#d8d8d8"/>
<path d="M522.6,337.7 v4.3 h5.2 M521.3,339 h5.2 v4.1" fill="none" stroke="#d8d8d8" stroke-width="0.8"/>
<path d="M523.2,341.5 l3,-2.3" stroke="#d8d8d8" stroke-width="0.5"/>
<rect x="532" y="339.9" width="4.8" height="3.2" fill="#e4e4e4"/>
<path d="M532.9,340 v-0.9 a1.5,1.5 0 0 1 3,0 v0.9" fill="none" stroke="#e4e4e4" stroke-width="0.8"/>
<rect x="534.1" y="341" width="0.6" height="1.1" fill="#2a2a2a"/>
<text x="547.8" y="342.3" font-size="4.8" fill="#c0c0c0">Fill:</text>
<rect x="556.4" y="336.9" width="15.6" height="6.5" fill="#202020" stroke="#333" stroke-width="0.5"/>
<text transform="translate(557.8,342.2) scale(0.86,1)" font-size="4.8" fill="#d0d0d0">100%</text>
<rect x="572.9" y="336.9" width="6.1" height="6.5" fill="#202020" stroke="#333" stroke-width="0.5"/>
<path d="M574.6,339.6 l1.3,1.2 l1.3,-1.2" fill="none" stroke="#c8c8c8" stroke-width="0.6"/>
<line x1="476" y1="347" x2="581" y2="347" stroke="#202020" stroke-width="0.8"/>
<!-- layer rows -->
<rect x="574.4" y="347.4" width="6.6" height="55.4" fill="#262626"/>
<!-- row1 -->
<path d="M480,354.5 q3.1,-3 6.2,0 q-3.1,3 -6.2,0 z" fill="#e6e6e6"/>
<circle cx="483.1" cy="354.5" r="1" fill="#2a2a2a"/>
<rect x="491.9" y="349.9" width="13.4" height="9.1" fill="#fafafa"/>
<path d="M496.3,350.9 l1.4,-0.4 h1.8 l1.4,0.4 l1.3,1.6 l-0.9,0.9 l-0.7,-0.5 v4.9 h-4 v-4.9 l-0.7,0.5 l-0.9,-0.9 z" fill="#62d4b6"/>

<rect x="507.7" y="351.2" width="1.9" height="2.5" rx="0.95" fill="none" stroke="#c4c4c4" stroke-width="0.6"/>
<rect x="507.7" y="354.6" width="1.9" height="2.5" rx="0.95" fill="none" stroke="#c4c4c4" stroke-width="0.6"/>
<rect x="513" y="349.9" width="12.9" height="9.1" fill="#050505"/>
<path d="M517.1,350.9 l1.4,-0.4 h1.8 l1.4,0.4 l1.3,1.6 l-0.9,0.9 l-0.7,-0.5 v4.9 h-4 v-4.9 l-0.7,0.5 l-0.9,-0.9 z" fill="#f6f6f6"/>
<text x="529.8" y="356.2" font-size="4.7" fill="#ececec">Background copy</text>
<!-- row2 -->
<rect x="480.4" y="365.2" width="6.4" height="5.4" fill="#262626" stroke="#303030" stroke-width="0.4"/>
<rect x="491.9" y="363.3" width="13.4" height="9.4" fill="#fafafa"/>
<path d="M496.3,364.4 l1.4,-0.4 h1.8 l1.4,0.4 l1.3,1.6 l-0.9,0.9 l-0.7,-0.5 v4.9 h-4 v-4.9 l-0.7,0.5 l-0.9,-0.9 z" fill="#62d4b6"/>
<text x="509.1" y="369.8" font-size="4.7" fill="#e6e6e6">Background</text>
<!-- row3 selected -->
<rect x="506.9" y="374.6" width="67.5" height="13.8" fill="#474747"/>
<path d="M480,382 q3.1,-3 6.2,0 q-3.1,3 -6.2,0 z" fill="#e6e6e6"/>
<circle cx="483.1" cy="382" r="1" fill="#2a2a2a"/>
<path d="M490.6,378.5 v-2.2 h3 M503.8,376.3 h3 v2.2 M506.8,385 v2.2 h-3 M493.6,387.2 h-3 v-2.2" fill="none" stroke="#d8d8d8" stroke-width="0.7"/>
<rect x="492.2" y="376.8" width="12.8" height="9.8" fill="#ebebeb"/>
<text x="509.1" y="383.8" font-size="4.7" fill="#ececec">Background</text>
<!-- footer -->
<rect x="476" y="402.6" width="105" height="11.2" fill="#2e2e2e"/>
<rect x="476" y="413.8" width="105" height="3.9" fill="#222"/>
<g fill="none" stroke="#7c7c7c" stroke-width="0.7"><ellipse cx="492.6" cy="408.35" rx="1.6" ry="1.1"/><ellipse cx="495.5" cy="408.35" rx="1.6" ry="1.1"/></g>
<text x="503.6" y="410.6" font-size="6" font-style="italic" fill="#c4c4c4" font-family="Liberation Serif, serif">fx</text>
<rect x="509.1" y="411.2" width="0.9" height="0.9" fill="#e0e0e0"/>
<rect x="515.1" y="406.25" width="6.2" height="3.8" fill="#f0f0f0"/>
<ellipse cx="518.2" cy="408.15" rx="1.5" ry="1.1" fill="#1e1e1e"/>
<circle cx="530.5" cy="408.3" r="2.3" fill="#e4e4e4"/>
<path d="M531.6,406.3 a2.3,2.3 0 0 1 0.9,3.2 l-2,-1.2 z" fill="#2e2e2e"/>
<rect x="533.1" y="411.1" width="0.9" height="0.9" fill="#e0e0e0"/>
<path d="M539.2,406.2 h2.3 l0.6,0.6 h2.9 v3.6 h-5.8 z" fill="#e0e0e0"/>
<rect x="539.2" y="407.3" width="5.8" height="0.4" fill="#9a9a9a"/>
<path d="M551.3,406.3 h5.8 v4.1 h-5.8 z" fill="#dcdcdc"/>
<path d="M551.3,406.3 h2.6 l-2.6,2.4 z" fill="#2e2e2e"/>
<path d="M552.5,407.3 h3.6 v2.2 h-3.6 z" fill="none" stroke="#2e2e2e" stroke-width="0.5" opacity="0.5"/>
<rect x="563.5" y="405.5" width="5" height="0.9" fill="#cfcfcf"/>
<rect x="564.9" y="405.0" width="2.2" height="0.6" fill="#cfcfcf"/>
<rect x="563.9" y="406.7" width="4.2" height="4.1" fill="#c8c8c8"/>
<path d="M565.3,407.2 v3.2 M566.7,407.2 v3.2" stroke="#2e2e2e" stroke-width="0.45"/>
</g>
</svg>
</body></html>
